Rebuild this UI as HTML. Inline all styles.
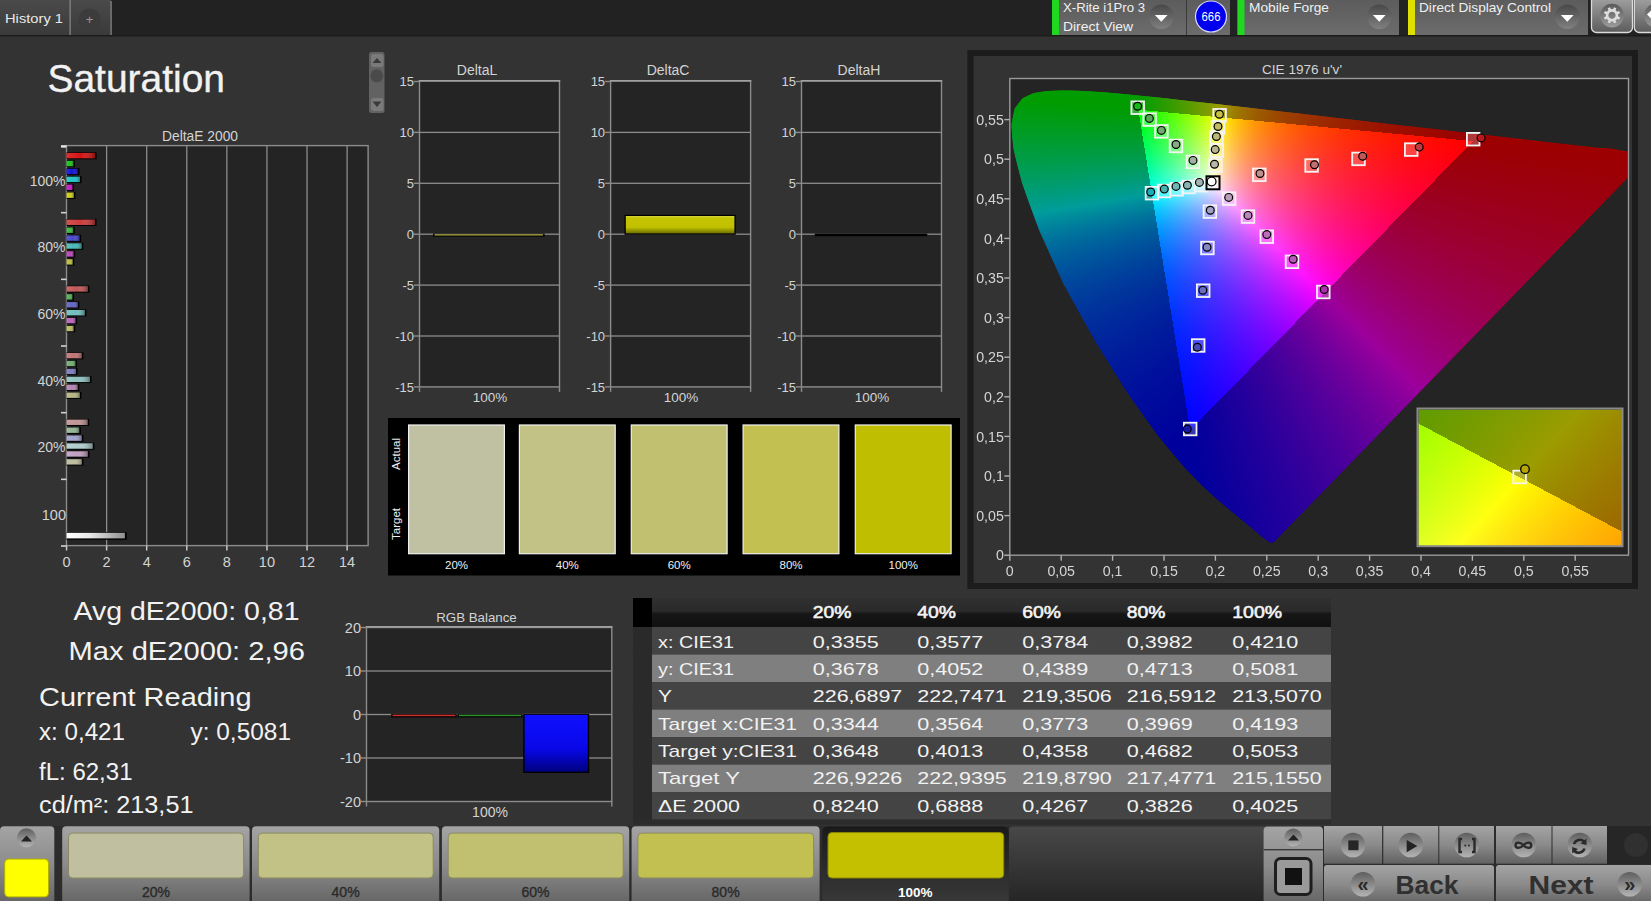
<!DOCTYPE html><html><head><meta charset="utf-8"><style>
html,body{margin:0;padding:0;width:1651px;height:901px;overflow:hidden;background:#333333;}
body{font-family:"Liberation Sans", sans-serif;position:relative;}
svg,canvas{position:absolute;left:0;top:0;}
</style></head><body>
<svg width="1651" height="901" viewBox="0 0 1651 901" font-family='"Liberation Sans", sans-serif'>
<defs>
<linearGradient id="tabg" x1="0" y1="0" x2="0" y2="1"><stop offset="0" stop-color="#4a4a4a"/><stop offset="1" stop-color="#3a3a3a"/></linearGradient>
<linearGradient id="selg" x1="0" y1="0" x2="0" y2="1"><stop offset="0" stop-color="#5c5c5c"/><stop offset="1" stop-color="#6c6c6c"/></linearGradient>
<linearGradient id="barsh" x1="0" y1="0" x2="1" y2="0"><stop offset="0" stop-color="#fff" stop-opacity="0.12"/><stop offset="0.5" stop-color="#fff" stop-opacity="0"/><stop offset="1" stop-color="#000" stop-opacity="0.35"/></linearGradient>
<linearGradient id="ybar" x1="0" y1="0" x2="0" y2="1"><stop offset="0" stop-color="#d4d440"/><stop offset="0.12" stop-color="#c4c400"/><stop offset="0.65" stop-color="#c0c000"/><stop offset="1" stop-color="#6e6e00"/></linearGradient>
<linearGradient id="bbar" x1="0" y1="0" x2="0" y2="1"><stop offset="0" stop-color="#1010ff"/><stop offset="0.6" stop-color="#0808e8"/><stop offset="1" stop-color="#000080"/></linearGradient>
<linearGradient id="btng" x1="0" y1="0" x2="0" y2="1"><stop offset="0" stop-color="#9a9a9a"/><stop offset="0.5" stop-color="#7a7a7a"/><stop offset="1" stop-color="#5a5a5a"/></linearGradient>
<linearGradient id="btnsel" x1="0" y1="0" x2="0" y2="1"><stop offset="0" stop-color="#2a2a2a"/><stop offset="1" stop-color="#3a3a3a"/></linearGradient>
<linearGradient id="bottomg" x1="0" y1="0" x2="0" y2="1"><stop offset="0" stop-color="#4a4a4a"/><stop offset="1" stop-color="#1e1e1e"/></linearGradient>
<linearGradient id="ctlg" x1="0" y1="0" x2="0" y2="1"><stop offset="0" stop-color="#a8a8a8"/><stop offset="1" stop-color="#6a6a6a"/></linearGradient>
<linearGradient id="knob" x1="0" y1="0" x2="0" y2="1"><stop offset="0" stop-color="#484848"/><stop offset="1" stop-color="#808080"/></linearGradient>
<linearGradient id="gearbtn" x1="0" y1="0" x2="0" y2="1"><stop offset="0" stop-color="#a4a4a4"/><stop offset="1" stop-color="#5c5c5c"/></linearGradient>
<linearGradient id="gknob" x1="0" y1="0" x2="0" y2="1"><stop offset="0" stop-color="#5a5a5a"/><stop offset="1" stop-color="#9c9c9c"/></linearGradient>
</defs>
<rect x="0" y="0" width="1651" height="36.3" fill="#222222"/><rect x="0" y="35" width="1651" height="1.3" fill="#1c1c1c"/>
<rect x="0" y="0" width="111" height="35" fill="url(#tabg)"/>
<rect x="69.5" y="0" width="1.2" height="35" fill="#8a8a8a"/>
<rect x="110.5" y="1" width="1.2" height="34" fill="#8a8a8a"/>
<circle cx="89.5" cy="19.5" r="11" fill="#3c3c3c"/>
<text x="89.5" y="23.5" font-size="13" fill="#9a9a9a" text-anchor="middle" >+</text>
<text x="5" y="23" font-size="13.5" fill="#e8e8e8" text-anchor="start" textLength="58" lengthAdjust="spacingAndGlyphs" >History 1</text>
<rect x="1052" y="0" width="134" height="35" fill="url(#selg)"/><rect x="1052" y="0" width="7" height="35" fill="#20d820"/>
<rect x="1186" y="0" width="1.2" height="35" fill="#3a3a3a"/>
<rect x="1187" y="0" width="43" height="35" fill="url(#selg)"/>
<rect x="1237.5" y="0" width="161.5" height="35" fill="url(#selg)"/><rect x="1237.5" y="0" width="7" height="35" fill="#20d820"/>
<rect x="1408" y="0" width="180" height="35" fill="url(#selg)"/><rect x="1408" y="0" width="7" height="35" fill="#e0e000"/>
<rect x="1591.5" y="-4" width="41" height="36.5" rx="5" fill="url(#gearbtn)" stroke="#dcdcdc" stroke-width="1.3"/>
<rect x="1634.3" y="-4" width="30" height="36.5" rx="5" fill="url(#gearbtn)" stroke="#dcdcdc" stroke-width="1.3"/>
<circle cx="1656" cy="15.6" r="11.8" fill="url(#gknob)"/>
<text x="1063" y="12" font-size="13" fill="#f0f0f0" text-anchor="start" textLength="82" lengthAdjust="spacingAndGlyphs" >X-Rite i1Pro 3</text>
<text x="1063" y="31" font-size="13" fill="#f0f0f0" text-anchor="start" textLength="70" lengthAdjust="spacingAndGlyphs" >Direct View</text>
<circle cx="1211" cy="16.5" r="15.5" fill="#0000ee" stroke="#d8d8ff" stroke-width="1.2"/>
<text x="1211" y="21" font-size="12" fill="#ffffff" text-anchor="middle" textLength="19" lengthAdjust="spacingAndGlyphs" >666</text>
<text x="1249" y="12" font-size="13" fill="#f0f0f0" text-anchor="start" textLength="80" lengthAdjust="spacingAndGlyphs" >Mobile Forge</text>
<text x="1419" y="12" font-size="13" fill="#f0f0f0" text-anchor="start" textLength="132" lengthAdjust="spacingAndGlyphs" >Direct Display Control</text>
<circle cx="1161.3" cy="16.7" r="12.3" fill="url(#knob)"/>
<path d="M1154.8 15.1 L1167.6 15.1 L1161.3 21.8 Z" fill="#ffffff"/>
<circle cx="1379.3" cy="16.7" r="12.3" fill="url(#knob)"/>
<path d="M1372.8 15.1 L1385.6 15.1 L1379.3 21.8 Z" fill="#ffffff"/>
<circle cx="1567.3" cy="16.7" r="12.3" fill="url(#knob)"/>
<path d="M1560.8 15.1 L1573.6 15.1 L1567.3 21.8 Z" fill="#ffffff"/>
<circle cx="1612" cy="15.6" r="11.8" fill="url(#gknob)"/>
<g transform="translate(1612,15.3)"><rect x="-1.3" y="-8.2" width="2.6" height="3.6" transform="rotate(22.5)" fill="#dedede"/><rect x="-1.3" y="-8.2" width="2.6" height="3.6" transform="rotate(67.5)" fill="#dedede"/><rect x="-1.3" y="-8.2" width="2.6" height="3.6" transform="rotate(112.5)" fill="#dedede"/><rect x="-1.3" y="-8.2" width="2.6" height="3.6" transform="rotate(157.5)" fill="#dedede"/><rect x="-1.3" y="-8.2" width="2.6" height="3.6" transform="rotate(202.5)" fill="#dedede"/><rect x="-1.3" y="-8.2" width="2.6" height="3.6" transform="rotate(247.5)" fill="#dedede"/><rect x="-1.3" y="-8.2" width="2.6" height="3.6" transform="rotate(292.5)" fill="#dedede"/><rect x="-1.3" y="-8.2" width="2.6" height="3.6" transform="rotate(337.5)" fill="#dedede"/><circle r="4.9" fill="none" stroke="#dedede" stroke-width="2.6"/></g>
<path d="M1647 14.5 L1651 10.5 L1651 18.5 Z" fill="#ffffff"/>
<text x="47.5" y="92" font-size="38.5" fill="#f2f2f2" text-anchor="start" textLength="177.5" lengthAdjust="spacingAndGlyphs" stroke="#f2f2f2" stroke-width="0.35">Saturation</text>
<rect x="369" y="52" width="15.5" height="61" rx="2.5" fill="#626262"/>
<rect x="371" y="54" width="12.5" height="13" rx="2.5" fill="#7a7a7a"/>
<path d="M372.5 63 L381.5 63 L377 58 Z" fill="#3a3a3a"/>
<circle cx="376.8" cy="75.8" r="6.5" fill="#4a4a4a"/>
<rect x="371" y="98" width="12.5" height="13" rx="2.5" fill="#7a7a7a"/>
<path d="M372.5 101.5 L381.5 101.5 L377 107 Z" fill="#3a3a3a"/>
<text x="200" y="141" font-size="14" fill="#d4d4d4" text-anchor="middle" textLength="76" lengthAdjust="spacingAndGlyphs" >DeltaE 2000</text>
<rect x="66.5" y="146" width="301.5" height="400" fill="#242424"/>
<rect x="105.98" y="146" width="1.3" height="400" fill="#8c8c8c"/>
<rect x="146.06" y="146" width="1.3" height="400" fill="#8c8c8c"/>
<rect x="186.14" y="146" width="1.3" height="400" fill="#8c8c8c"/>
<rect x="226.22" y="146" width="1.3" height="400" fill="#8c8c8c"/>
<rect x="266.30" y="146" width="1.3" height="400" fill="#8c8c8c"/>
<rect x="306.38" y="146" width="1.3" height="400" fill="#8c8c8c"/>
<rect x="346.46" y="146" width="1.3" height="400" fill="#8c8c8c"/>
<rect x="66.5" y="145.6" width="301.6" height="400" fill="none" stroke="#8c8c8c" stroke-width="1.4"/>
<rect x="65.80" y="545.5" width="1.5" height="5" fill="#c8c8c8"/>
<text x="66.5" y="566.8" font-size="14.5" fill="#d4d4d4" text-anchor="middle" >0</text>
<rect x="105.88" y="545.5" width="1.5" height="5" fill="#c8c8c8"/>
<text x="106.6" y="566.8" font-size="14.5" fill="#d4d4d4" text-anchor="middle" >2</text>
<rect x="145.96" y="545.5" width="1.5" height="5" fill="#c8c8c8"/>
<text x="146.7" y="566.8" font-size="14.5" fill="#d4d4d4" text-anchor="middle" >4</text>
<rect x="186.04" y="545.5" width="1.5" height="5" fill="#c8c8c8"/>
<text x="186.7" y="566.8" font-size="14.5" fill="#d4d4d4" text-anchor="middle" >6</text>
<rect x="226.12" y="545.5" width="1.5" height="5" fill="#c8c8c8"/>
<text x="226.8" y="566.8" font-size="14.5" fill="#d4d4d4" text-anchor="middle" >8</text>
<rect x="266.20" y="545.5" width="1.5" height="5" fill="#c8c8c8"/>
<text x="266.9" y="566.8" font-size="14.5" fill="#d4d4d4" text-anchor="middle" >10</text>
<rect x="306.28" y="545.5" width="1.5" height="5" fill="#c8c8c8"/>
<text x="307.0" y="566.8" font-size="14.5" fill="#d4d4d4" text-anchor="middle" >12</text>
<rect x="346.36" y="545.5" width="1.5" height="5" fill="#c8c8c8"/>
<text x="347.1" y="566.8" font-size="14.5" fill="#d4d4d4" text-anchor="middle" >14</text>
<rect x="61" y="145.20" width="5.5" height="2.4" fill="#e8e8e8"/>
<rect x="61" y="211.87" width="5.5" height="1.6" fill="#d0d0d0"/>
<rect x="61" y="278.53" width="5.5" height="1.6" fill="#d0d0d0"/>
<rect x="61" y="345.20" width="5.5" height="1.6" fill="#d0d0d0"/>
<rect x="61" y="411.87" width="5.5" height="1.6" fill="#d0d0d0"/>
<rect x="61" y="478.53" width="5.5" height="1.6" fill="#d0d0d0"/>
<rect x="61" y="545.20" width="5.5" height="1.6" fill="#d0d0d0"/>
<text x="65.5" y="185.5" font-size="14" fill="#d4d4d4" text-anchor="end" >100%</text>
<text x="65.5" y="252.16666666666669" font-size="14" fill="#d4d4d4" text-anchor="end" >80%</text>
<text x="65.5" y="318.83333333333337" font-size="14" fill="#d4d4d4" text-anchor="end" >60%</text>
<text x="65.5" y="385.5" font-size="14" fill="#d4d4d4" text-anchor="end" >40%</text>
<text x="65.5" y="452.1666666666667" font-size="14" fill="#d4d4d4" text-anchor="end" >20%</text>
<text x="66" y="519.5" font-size="14.5" fill="#d4d4d4" text-anchor="end" >100</text>
<rect x="66.5" y="152.30" width="30.10" height="7" fill="#000"/>
<rect x="66.5" y="152.90" width="28.50" height="5.4" fill="#d41414"/>
<rect x="66.5" y="152.90" width="28.50" height="5.4" fill="url(#barsh)"/>
<rect x="66.5" y="160.22" width="8.50" height="7" fill="#000"/>
<rect x="66.5" y="160.82" width="6.90" height="5.4" fill="#20c020"/>
<rect x="66.5" y="160.82" width="6.90" height="5.4" fill="url(#barsh)"/>
<rect x="66.5" y="168.14" width="13.05" height="7" fill="#000"/>
<rect x="66.5" y="168.74" width="11.45" height="5.4" fill="#1414d4"/>
<rect x="66.5" y="168.74" width="11.45" height="5.4" fill="url(#barsh)"/>
<rect x="66.5" y="176.06" width="15.10" height="7" fill="#000"/>
<rect x="66.5" y="176.66" width="13.50" height="5.4" fill="#20c4c4"/>
<rect x="66.5" y="176.66" width="13.50" height="5.4" fill="url(#barsh)"/>
<rect x="66.5" y="183.98" width="7.60" height="7" fill="#000"/>
<rect x="66.5" y="184.58" width="6.00" height="5.4" fill="#c420c4"/>
<rect x="66.5" y="184.58" width="6.00" height="5.4" fill="url(#barsh)"/>
<rect x="66.5" y="191.90" width="8.90" height="7" fill="#000"/>
<rect x="66.5" y="192.50" width="7.30" height="5.4" fill="#cccc20"/>
<rect x="66.5" y="192.50" width="7.30" height="5.4" fill="url(#barsh)"/>
<rect x="66.5" y="218.97" width="30.00" height="7" fill="#000"/>
<rect x="66.5" y="219.57" width="28.40" height="5.4" fill="#cc3c3c"/>
<rect x="66.5" y="219.57" width="28.40" height="5.4" fill="url(#barsh)"/>
<rect x="66.5" y="226.89" width="8.30" height="7" fill="#000"/>
<rect x="66.5" y="227.49" width="6.70" height="5.4" fill="#40b440"/>
<rect x="66.5" y="227.49" width="6.70" height="5.4" fill="url(#barsh)"/>
<rect x="66.5" y="234.81" width="14.60" height="7" fill="#000"/>
<rect x="66.5" y="235.41" width="13.00" height="5.4" fill="#4848cc"/>
<rect x="66.5" y="235.41" width="13.00" height="5.4" fill="url(#barsh)"/>
<rect x="66.5" y="242.73" width="16.80" height="7" fill="#000"/>
<rect x="66.5" y="243.33" width="15.20" height="5.4" fill="#48b8b8"/>
<rect x="66.5" y="243.33" width="15.20" height="5.4" fill="url(#barsh)"/>
<rect x="66.5" y="250.65" width="8.70" height="7" fill="#000"/>
<rect x="66.5" y="251.25" width="7.10" height="5.4" fill="#bc48bc"/>
<rect x="66.5" y="251.25" width="7.10" height="5.4" fill="url(#barsh)"/>
<rect x="66.5" y="258.57" width="7.80" height="7" fill="#000"/>
<rect x="66.5" y="259.17" width="6.20" height="5.4" fill="#bcbc48"/>
<rect x="66.5" y="259.17" width="6.20" height="5.4" fill="url(#barsh)"/>
<rect x="66.5" y="285.63" width="23.00" height="7" fill="#000"/>
<rect x="66.5" y="286.23" width="21.40" height="5.4" fill="#c05858"/>
<rect x="66.5" y="286.23" width="21.40" height="5.4" fill="url(#barsh)"/>
<rect x="66.5" y="293.55" width="7.50" height="7" fill="#000"/>
<rect x="66.5" y="294.15" width="5.90" height="5.4" fill="#58b058"/>
<rect x="66.5" y="294.15" width="5.90" height="5.4" fill="url(#barsh)"/>
<rect x="66.5" y="301.47" width="12.90" height="7" fill="#000"/>
<rect x="66.5" y="302.07" width="11.30" height="5.4" fill="#6464c4"/>
<rect x="66.5" y="302.07" width="11.30" height="5.4" fill="url(#barsh)"/>
<rect x="66.5" y="309.39" width="19.90" height="7" fill="#000"/>
<rect x="66.5" y="309.99" width="18.30" height="5.4" fill="#70bcbc"/>
<rect x="66.5" y="309.99" width="18.30" height="5.4" fill="url(#barsh)"/>
<rect x="66.5" y="317.31" width="10.60" height="7" fill="#000"/>
<rect x="66.5" y="317.91" width="9.00" height="5.4" fill="#b864b8"/>
<rect x="66.5" y="317.91" width="9.00" height="5.4" fill="url(#barsh)"/>
<rect x="66.5" y="325.23" width="8.70" height="7" fill="#000"/>
<rect x="66.5" y="325.83" width="7.10" height="5.4" fill="#b8b864"/>
<rect x="66.5" y="325.83" width="7.10" height="5.4" fill="url(#barsh)"/>
<rect x="66.5" y="352.30" width="16.90" height="7" fill="#000"/>
<rect x="66.5" y="352.90" width="15.30" height="5.4" fill="#c07474"/>
<rect x="66.5" y="352.90" width="15.30" height="5.4" fill="url(#barsh)"/>
<rect x="66.5" y="360.22" width="10.50" height="7" fill="#000"/>
<rect x="66.5" y="360.82" width="8.90" height="5.4" fill="#74ac74"/>
<rect x="66.5" y="360.82" width="8.90" height="5.4" fill="url(#barsh)"/>
<rect x="66.5" y="368.14" width="11.10" height="7" fill="#000"/>
<rect x="66.5" y="368.74" width="9.50" height="5.4" fill="#7c7cc0"/>
<rect x="66.5" y="368.74" width="9.50" height="5.4" fill="url(#barsh)"/>
<rect x="66.5" y="376.06" width="25.00" height="7" fill="#000"/>
<rect x="66.5" y="376.66" width="23.40" height="5.4" fill="#90c0c0"/>
<rect x="66.5" y="376.66" width="23.40" height="5.4" fill="url(#barsh)"/>
<rect x="66.5" y="383.98" width="12.80" height="7" fill="#000"/>
<rect x="66.5" y="384.58" width="11.20" height="5.4" fill="#b484b4"/>
<rect x="66.5" y="384.58" width="11.20" height="5.4" fill="url(#barsh)"/>
<rect x="66.5" y="391.90" width="14.90" height="7" fill="#000"/>
<rect x="66.5" y="392.50" width="13.30" height="5.4" fill="#b4b484"/>
<rect x="66.5" y="392.50" width="13.30" height="5.4" fill="url(#barsh)"/>
<rect x="66.5" y="418.97" width="22.70" height="7" fill="#000"/>
<rect x="66.5" y="419.57" width="21.10" height="5.4" fill="#c09494"/>
<rect x="66.5" y="419.57" width="21.10" height="5.4" fill="url(#barsh)"/>
<rect x="66.5" y="426.89" width="14.30" height="7" fill="#000"/>
<rect x="66.5" y="427.49" width="12.70" height="5.4" fill="#94b494"/>
<rect x="66.5" y="427.49" width="12.70" height="5.4" fill="url(#barsh)"/>
<rect x="66.5" y="434.81" width="16.90" height="7" fill="#000"/>
<rect x="66.5" y="435.41" width="15.30" height="5.4" fill="#a0a0cc"/>
<rect x="66.5" y="435.41" width="15.30" height="5.4" fill="url(#barsh)"/>
<rect x="66.5" y="442.73" width="27.80" height="7" fill="#000"/>
<rect x="66.5" y="443.33" width="26.20" height="5.4" fill="#b0cccc"/>
<rect x="66.5" y="443.33" width="26.20" height="5.4" fill="url(#barsh)"/>
<rect x="66.5" y="450.65" width="22.90" height="7" fill="#000"/>
<rect x="66.5" y="451.25" width="21.30" height="5.4" fill="#c0a0c0"/>
<rect x="66.5" y="451.25" width="21.30" height="5.4" fill="url(#barsh)"/>
<rect x="66.5" y="458.57" width="16.90" height="7" fill="#000"/>
<rect x="66.5" y="459.17" width="15.30" height="5.4" fill="#bcbca0"/>
<rect x="66.5" y="459.17" width="15.30" height="5.4" fill="url(#barsh)"/>
<linearGradient id="wbar" x1="0" y1="0" x2="1" y2="0"><stop offset="0" stop-color="#ffffff"/><stop offset="0.4" stop-color="#e8e8e8"/><stop offset="1" stop-color="#909090"/></linearGradient>
<rect x="66.5" y="532.2" width="60.20" height="7.6" fill="#000"/>
<rect x="66.5" y="532.8" width="58.40" height="5.6" fill="url(#wbar)"/>
<rect x="419.5" y="81.50" width="140.0" height="305.40" fill="#242424"/><rect x="419.5" y="131.75" width="140.0" height="1.3" fill="#8c8c8c"/><rect x="419.5" y="182.65" width="140.0" height="1.3" fill="#8c8c8c"/><rect x="419.5" y="233.55" width="140.0" height="1.3" fill="#8c8c8c"/><rect x="419.5" y="284.45" width="140.0" height="1.3" fill="#8c8c8c"/><rect x="419.5" y="335.35" width="140.0" height="1.3" fill="#8c8c8c"/><rect x="419.5" y="80.80" width="140.0" height="306.10" fill="none" stroke="#8c8c8c" stroke-width="1.4"/><rect x="418.8" y="80.00" width="141.4" height="1.6" fill="#a0a0a0"/><rect x="414.0" y="80.80" width="5.5" height="1.4" fill="#8c8c8c"/><text x="414.0" y="86.30" font-size="13" fill="#d4d4d4" text-anchor="end" >15</text><rect x="414.0" y="131.70" width="5.5" height="1.4" fill="#8c8c8c"/><text x="414.0" y="137.20" font-size="13" fill="#d4d4d4" text-anchor="end" >10</text><rect x="414.0" y="182.60" width="5.5" height="1.4" fill="#8c8c8c"/><text x="414.0" y="188.10" font-size="13" fill="#d4d4d4" text-anchor="end" >5</text><rect x="414.0" y="233.50" width="5.5" height="1.4" fill="#8c8c8c"/><text x="414.0" y="239.00" font-size="13" fill="#d4d4d4" text-anchor="end" >0</text><rect x="414.0" y="284.40" width="5.5" height="1.4" fill="#8c8c8c"/><text x="414.0" y="289.90" font-size="13" fill="#d4d4d4" text-anchor="end" >-5</text><rect x="414.0" y="335.30" width="5.5" height="1.4" fill="#8c8c8c"/><text x="414.0" y="340.80" font-size="13" fill="#d4d4d4" text-anchor="end" >-10</text><rect x="414.0" y="386.20" width="5.5" height="1.4" fill="#8c8c8c"/><text x="414.0" y="391.70" font-size="13" fill="#d4d4d4" text-anchor="end" >-15</text><rect x="418.8" y="386.9" width="1.4" height="5" fill="#8c8c8c"/><rect x="558.8" y="386.9" width="1.4" height="5" fill="#8c8c8c"/><text x="477.0" y="75" font-size="14" fill="#d4d4d4" text-anchor="middle" >DeltaL</text><text x="490.0" y="401.5" font-size="13.5" fill="#d4d4d4" text-anchor="middle" >100%</text><rect x="433" y="233.6" width="111.6" height="3" fill="#000"/><rect x="434.5" y="234.2" width="108.6" height="1.3" fill="#b0b040"/>
<rect x="610.6" y="81.50" width="140.0" height="305.40" fill="#242424"/><rect x="610.6" y="131.75" width="140.0" height="1.3" fill="#8c8c8c"/><rect x="610.6" y="182.65" width="140.0" height="1.3" fill="#8c8c8c"/><rect x="610.6" y="233.55" width="140.0" height="1.3" fill="#8c8c8c"/><rect x="610.6" y="284.45" width="140.0" height="1.3" fill="#8c8c8c"/><rect x="610.6" y="335.35" width="140.0" height="1.3" fill="#8c8c8c"/><rect x="610.6" y="80.80" width="140.0" height="306.10" fill="none" stroke="#8c8c8c" stroke-width="1.4"/><rect x="609.9" y="80.00" width="141.4" height="1.6" fill="#a0a0a0"/><rect x="605.1" y="80.80" width="5.5" height="1.4" fill="#8c8c8c"/><text x="605.1" y="86.30" font-size="13" fill="#d4d4d4" text-anchor="end" >15</text><rect x="605.1" y="131.70" width="5.5" height="1.4" fill="#8c8c8c"/><text x="605.1" y="137.20" font-size="13" fill="#d4d4d4" text-anchor="end" >10</text><rect x="605.1" y="182.60" width="5.5" height="1.4" fill="#8c8c8c"/><text x="605.1" y="188.10" font-size="13" fill="#d4d4d4" text-anchor="end" >5</text><rect x="605.1" y="233.50" width="5.5" height="1.4" fill="#8c8c8c"/><text x="605.1" y="239.00" font-size="13" fill="#d4d4d4" text-anchor="end" >0</text><rect x="605.1" y="284.40" width="5.5" height="1.4" fill="#8c8c8c"/><text x="605.1" y="289.90" font-size="13" fill="#d4d4d4" text-anchor="end" >-5</text><rect x="605.1" y="335.30" width="5.5" height="1.4" fill="#8c8c8c"/><text x="605.1" y="340.80" font-size="13" fill="#d4d4d4" text-anchor="end" >-10</text><rect x="605.1" y="386.20" width="5.5" height="1.4" fill="#8c8c8c"/><text x="605.1" y="391.70" font-size="13" fill="#d4d4d4" text-anchor="end" >-15</text><rect x="609.9" y="386.9" width="1.4" height="5" fill="#8c8c8c"/><rect x="749.9" y="386.9" width="1.4" height="5" fill="#8c8c8c"/><text x="668.1" y="75" font-size="14" fill="#d4d4d4" text-anchor="middle" >DeltaC</text><text x="681.1" y="401.5" font-size="13.5" fill="#d4d4d4" text-anchor="middle" >100%</text><rect x="624.5" y="214.8" width="111.2" height="20" fill="#000"/><rect x="625.8" y="216" width="108.6" height="17.4" fill="url(#ybar)"/>
<rect x="801.5" y="81.50" width="140.0" height="305.40" fill="#242424"/><rect x="801.5" y="131.75" width="140.0" height="1.3" fill="#8c8c8c"/><rect x="801.5" y="182.65" width="140.0" height="1.3" fill="#8c8c8c"/><rect x="801.5" y="233.55" width="140.0" height="1.3" fill="#8c8c8c"/><rect x="801.5" y="284.45" width="140.0" height="1.3" fill="#8c8c8c"/><rect x="801.5" y="335.35" width="140.0" height="1.3" fill="#8c8c8c"/><rect x="801.5" y="80.80" width="140.0" height="306.10" fill="none" stroke="#8c8c8c" stroke-width="1.4"/><rect x="800.8" y="80.00" width="141.4" height="1.6" fill="#a0a0a0"/><rect x="796.0" y="80.80" width="5.5" height="1.4" fill="#8c8c8c"/><text x="796.0" y="86.30" font-size="13" fill="#d4d4d4" text-anchor="end" >15</text><rect x="796.0" y="131.70" width="5.5" height="1.4" fill="#8c8c8c"/><text x="796.0" y="137.20" font-size="13" fill="#d4d4d4" text-anchor="end" >10</text><rect x="796.0" y="182.60" width="5.5" height="1.4" fill="#8c8c8c"/><text x="796.0" y="188.10" font-size="13" fill="#d4d4d4" text-anchor="end" >5</text><rect x="796.0" y="233.50" width="5.5" height="1.4" fill="#8c8c8c"/><text x="796.0" y="239.00" font-size="13" fill="#d4d4d4" text-anchor="end" >0</text><rect x="796.0" y="284.40" width="5.5" height="1.4" fill="#8c8c8c"/><text x="796.0" y="289.90" font-size="13" fill="#d4d4d4" text-anchor="end" >-5</text><rect x="796.0" y="335.30" width="5.5" height="1.4" fill="#8c8c8c"/><text x="796.0" y="340.80" font-size="13" fill="#d4d4d4" text-anchor="end" >-10</text><rect x="796.0" y="386.20" width="5.5" height="1.4" fill="#8c8c8c"/><text x="796.0" y="391.70" font-size="13" fill="#d4d4d4" text-anchor="end" >-15</text><rect x="800.8" y="386.9" width="1.4" height="5" fill="#8c8c8c"/><rect x="940.8" y="386.9" width="1.4" height="5" fill="#8c8c8c"/><text x="859.0" y="75" font-size="14" fill="#d4d4d4" text-anchor="middle" >DeltaH</text><text x="872.0" y="401.5" font-size="13.5" fill="#d4d4d4" text-anchor="middle" >100%</text><rect x="814.7" y="233.6" width="112.6" height="2.6" fill="#000"/>
<rect x="388" y="418" width="572" height="157.5" fill="#000"/>
<rect x="408.6" y="425" width="95.8" height="128.7" fill="#c0c0a2" stroke="#f0f0f0" stroke-width="1.2"/>
<text x="456.5" y="568.5" font-size="11.5" fill="#f0f0f0" text-anchor="middle" >20%</text>
<rect x="519.4" y="425" width="95.8" height="128.7" fill="#c2c286" stroke="#f0f0f0" stroke-width="1.2"/>
<text x="567.3" y="568.5" font-size="11.5" fill="#f0f0f0" text-anchor="middle" >40%</text>
<rect x="631.3" y="425" width="95.8" height="128.7" fill="#c0c070" stroke="#f0f0f0" stroke-width="1.2"/>
<text x="679.2" y="568.5" font-size="11.5" fill="#f0f0f0" text-anchor="middle" >60%</text>
<rect x="743.1" y="425" width="95.8" height="128.7" fill="#c2c050" stroke="#f0f0f0" stroke-width="1.2"/>
<text x="791.0" y="568.5" font-size="11.5" fill="#f0f0f0" text-anchor="middle" >80%</text>
<rect x="855.3" y="425" width="95.8" height="128.7" fill="#c0be00" stroke="#f0f0f0" stroke-width="1.2"/>
<text x="903.2" y="568.5" font-size="11.5" fill="#f0f0f0" text-anchor="middle" >100%</text>
<text transform="translate(400,454) rotate(-90)" font-size="11.5" fill="#f0f0f0" text-anchor="middle">Actual</text>
<text transform="translate(400,524) rotate(-90)" font-size="11.5" fill="#f0f0f0" text-anchor="middle">Target</text>
<rect x="967.4" y="50" width="670.6" height="539" fill="#1c1c1c"/>
<rect x="973.6" y="56" width="658.4" height="527" fill="#333333"/>
<text x="1302" y="74" font-size="13.5" fill="#d4d4d4" text-anchor="middle" textLength="80" lengthAdjust="spacingAndGlyphs" >CIE 1976 u'v'</text>
<rect x="1009.8" y="78.5" width="618.7" height="476.7" fill="#242424"/>
<clipPath id="locus"><path d="M1273.8 542.1 L1273.6 542.1 L1273.4 542.3 L1273.1 542.3 L1272.7 542.6 L1272.1 542.6 L1271.5 542.6 L1270.6 542.6 L1269.1 541.8 L1266.4 540.1 L1262.8 537.3 L1257.6 533.1 L1251.1 527.5 L1242.8 520.6 L1231.9 511.7 L1218.8 500.7 L1202.8 486.2 L1183.5 466.5 L1157.9 435.6 L1127.7 393.3 L1094.9 340.7 L1063.4 283.8 L1038.7 229.2 L1022.0 183.1 L1013.4 148.9 L1011.3 125.0 L1014.6 108.6 L1022.4 98.2 L1033.6 92.9 L1046.8 91.0 L1061.3 90.5 L1075.9 90.7 L1091.2 91.4 L1107.7 92.6 L1125.7 94.2 L1145.4 96.2 L1167.2 98.5 L1191.3 101.2 L1218.1 104.3 L1247.4 107.6 L1279.5 111.3 L1314.0 115.3 L1350.6 119.5 L1388.2 123.9 L1424.6 128.0 L1460.0 132.1 L1492.1 135.8 L1520.5 139.1 L1544.6 141.9 L1564.8 144.2 L1581.9 146.1 L1596.7 147.8 L1612.3 148.8 L1619.3 150.4 L1627.1 151.3 L1633.2 152.0 L1637.8 152.6 L1640.8 152.9 L1643.2 153.2 L1645.1 153.4 L1647.1 153.6 L1648.7 153.8 L1649.8 154.0 L1650.4 154.0 L1650.6 154.1 Z"/></clipPath><g clip-path="url(#locus)" shape-rendering="crispEdges"><rect x="1010" y="79" width="128" height="8" fill="#00a000"/><rect x="1138" y="79" width="16" height="8" fill="#10a000"/><rect x="1154" y="79" width="8" height="8" fill="#20a000"/><rect x="1162" y="79" width="8" height="8" fill="#30a000"/><rect x="1170" y="79" width="8" height="8" fill="#40a000"/><rect x="1178" y="79" width="8" height="8" fill="#50a000"/><rect x="1186" y="79" width="16" height="8" fill="#60a000"/><rect x="1202" y="79" width="8" height="8" fill="#70a000"/><rect x="1210" y="79" width="8" height="8" fill="#90a000"/><rect x="1218" y="79" width="8" height="8" fill="#a0a000"/><rect x="1226" y="79" width="8" height="8" fill="#a09000"/><rect x="1234" y="79" width="8" height="8" fill="#a08000"/><rect x="1242" y="79" width="8" height="8" fill="#a07000"/><rect x="1250" y="79" width="16" height="8" fill="#a06000"/><rect x="1266" y="79" width="24" height="8" fill="#a05000"/><rect x="1290" y="79" width="24" height="8" fill="#a04000"/><rect x="1314" y="79" width="32" height="8" fill="#a03000"/><rect x="1346" y="79" width="48" height="8" fill="#a02000"/><rect x="1394" y="79" width="80" height="8" fill="#a01000"/><rect x="1474" y="79" width="155" height="8" fill="#a00000"/><rect x="1010" y="87" width="128" height="8" fill="#00a000"/><rect x="1138" y="87" width="16" height="8" fill="#10a000"/><rect x="1154" y="87" width="8" height="8" fill="#20a000"/><rect x="1162" y="87" width="8" height="8" fill="#30a000"/><rect x="1170" y="87" width="8" height="8" fill="#40a000"/><rect x="1178" y="87" width="8" height="8" fill="#50a000"/><rect x="1186" y="87" width="8" height="8" fill="#60a000"/><rect x="1194" y="87" width="8" height="8" fill="#70a000"/><rect x="1202" y="87" width="8" height="8" fill="#80a000"/><rect x="1210" y="87" width="8" height="8" fill="#90a000"/><rect x="1218" y="87" width="8" height="8" fill="#a0a000"/><rect x="1226" y="87" width="8" height="8" fill="#a09000"/><rect x="1234" y="87" width="8" height="8" fill="#a08000"/><rect x="1242" y="87" width="8" height="8" fill="#a07000"/><rect x="1250" y="87" width="16" height="8" fill="#a06000"/><rect x="1266" y="87" width="16" height="8" fill="#a05000"/><rect x="1282" y="87" width="24" height="8" fill="#a04000"/><rect x="1306" y="87" width="32" height="8" fill="#a03000"/><rect x="1338" y="87" width="48" height="8" fill="#a02000"/><rect x="1386" y="87" width="80" height="8" fill="#a01000"/><rect x="1466" y="87" width="163" height="8" fill="#a00000"/><rect x="1010" y="95" width="136" height="8" fill="#00a000"/><rect x="1146" y="95" width="8" height="8" fill="#10a000"/><rect x="1154" y="95" width="8" height="8" fill="#20a000"/><rect x="1162" y="95" width="8" height="8" fill="#30a000"/><rect x="1170" y="95" width="8" height="8" fill="#40a000"/><rect x="1178" y="95" width="8" height="8" fill="#50a000"/><rect x="1186" y="95" width="8" height="8" fill="#60a000"/><rect x="1194" y="95" width="8" height="8" fill="#70a000"/><rect x="1202" y="95" width="8" height="8" fill="#80a000"/><rect x="1210" y="95" width="8" height="8" fill="#90a000"/><rect x="1218" y="95" width="8" height="8" fill="#a0a000"/><rect x="1226" y="95" width="8" height="8" fill="#a09000"/><rect x="1234" y="95" width="8" height="8" fill="#a08000"/><rect x="1242" y="95" width="8" height="8" fill="#a07000"/><rect x="1250" y="95" width="16" height="8" fill="#a06000"/><rect x="1266" y="95" width="16" height="8" fill="#a05000"/><rect x="1282" y="95" width="24" height="8" fill="#a04000"/><rect x="1306" y="95" width="32" height="8" fill="#a03000"/><rect x="1338" y="95" width="48" height="8" fill="#a02000"/><rect x="1386" y="95" width="72" height="8" fill="#a01000"/><rect x="1458" y="95" width="171" height="8" fill="#a00000"/><rect x="1010" y="103" width="16" height="8" fill="#00a010"/><rect x="1026" y="103" width="120" height="8" fill="#00a000"/><rect x="1146" y="103" width="8" height="8" fill="#10a000"/><rect x="1154" y="103" width="8" height="8" fill="#20a000"/><rect x="1162" y="103" width="8" height="8" fill="#30a000"/><rect x="1170" y="103" width="8" height="8" fill="#40a000"/><rect x="1178" y="103" width="8" height="8" fill="#50a000"/><rect x="1186" y="103" width="8" height="8" fill="#60a000"/><rect x="1194" y="103" width="8" height="8" fill="#70a000"/><rect x="1202" y="103" width="8" height="8" fill="#80a000"/><rect x="1210" y="103" width="8" height="8" fill="#90a000"/><rect x="1218" y="103" width="8" height="8" fill="#a09000"/><rect x="1226" y="103" width="16" height="8" fill="#a08000"/><rect x="1242" y="103" width="8" height="8" fill="#a07000"/><rect x="1250" y="103" width="16" height="8" fill="#a06000"/><rect x="1266" y="103" width="16" height="8" fill="#a05000"/><rect x="1282" y="103" width="16" height="8" fill="#a04000"/><rect x="1298" y="103" width="32" height="8" fill="#a03000"/><rect x="1330" y="103" width="48" height="8" fill="#a02000"/><rect x="1378" y="103" width="72" height="8" fill="#a01000"/><rect x="1450" y="103" width="179" height="8" fill="#a00000"/><rect x="1010" y="111" width="120" height="8" fill="#00a010"/><rect x="1130" y="111" width="8" height="8" fill="#00a000"/><rect x="1138" y="111" width="8" height="8" fill="#00ff10"/><rect x="1146" y="111" width="8" height="8" fill="#20ff10"/><rect x="1154" y="111" width="8" height="8" fill="#30ff10"/><rect x="1162" y="111" width="8" height="8" fill="#40ff00"/><rect x="1170" y="111" width="8" height="8" fill="#60ff00"/><rect x="1178" y="111" width="8" height="8" fill="#70ff00"/><rect x="1186" y="111" width="8" height="8" fill="#90ff00"/><rect x="1194" y="111" width="8" height="8" fill="#70a000"/><rect x="1202" y="111" width="8" height="8" fill="#80a000"/><rect x="1210" y="111" width="8" height="8" fill="#90a000"/><rect x="1218" y="111" width="8" height="8" fill="#a09000"/><rect x="1226" y="111" width="8" height="8" fill="#a08000"/><rect x="1234" y="111" width="16" height="8" fill="#a07000"/><rect x="1250" y="111" width="8" height="8" fill="#a06000"/><rect x="1258" y="111" width="16" height="8" fill="#a05000"/><rect x="1274" y="111" width="24" height="8" fill="#a04000"/><rect x="1298" y="111" width="32" height="8" fill="#a03000"/><rect x="1330" y="111" width="40" height="8" fill="#a02000"/><rect x="1370" y="111" width="72" height="8" fill="#a01000"/><rect x="1442" y="111" width="187" height="8" fill="#a00000"/><rect x="1010" y="119" width="48" height="8" fill="#00a020"/><rect x="1058" y="119" width="80" height="8" fill="#00a010"/><rect x="1138" y="119" width="8" height="8" fill="#00ff20"/><rect x="1146" y="119" width="8" height="8" fill="#20ff20"/><rect x="1154" y="119" width="8" height="8" fill="#30ff20"/><rect x="1162" y="119" width="8" height="8" fill="#40ff20"/><rect x="1170" y="119" width="8" height="8" fill="#60ff20"/><rect x="1178" y="119" width="8" height="8" fill="#70ff20"/><rect x="1186" y="119" width="8" height="8" fill="#90ff10"/><rect x="1194" y="119" width="8" height="8" fill="#b0ff10"/><rect x="1202" y="119" width="8" height="8" fill="#d0ff10"/><rect x="1210" y="119" width="8" height="8" fill="#f0ff10"/><rect x="1218" y="119" width="8" height="8" fill="#fff010"/><rect x="1226" y="119" width="8" height="8" fill="#ffd010"/><rect x="1234" y="119" width="8" height="8" fill="#ffc010"/><rect x="1242" y="119" width="8" height="8" fill="#ffb000"/><rect x="1250" y="119" width="8" height="8" fill="#ffa000"/><rect x="1258" y="119" width="8" height="8" fill="#ff9000"/><rect x="1266" y="119" width="8" height="8" fill="#ff8000"/><rect x="1274" y="119" width="8" height="8" fill="#ff7000"/><rect x="1282" y="119" width="16" height="8" fill="#a04000"/><rect x="1298" y="119" width="24" height="8" fill="#a03000"/><rect x="1322" y="119" width="48" height="8" fill="#a02000"/><rect x="1370" y="119" width="64" height="8" fill="#a01000"/><rect x="1434" y="119" width="195" height="8" fill="#a00000"/><rect x="1010" y="127" width="128" height="8" fill="#00a020"/><rect x="1138" y="127" width="8" height="8" fill="#00ff30"/><rect x="1146" y="127" width="8" height="8" fill="#10ff30"/><rect x="1154" y="127" width="8" height="8" fill="#30ff30"/><rect x="1162" y="127" width="8" height="8" fill="#40ff30"/><rect x="1170" y="127" width="8" height="8" fill="#60ff30"/><rect x="1178" y="127" width="8" height="8" fill="#70ff30"/><rect x="1186" y="127" width="8" height="8" fill="#90ff30"/><rect x="1194" y="127" width="8" height="8" fill="#b0ff30"/><rect x="1202" y="127" width="8" height="8" fill="#d0ff30"/><rect x="1210" y="127" width="8" height="8" fill="#f0ff30"/><rect x="1218" y="127" width="8" height="8" fill="#fff020"/><rect x="1226" y="127" width="8" height="8" fill="#ffd020"/><rect x="1234" y="127" width="8" height="8" fill="#ffc020"/><rect x="1242" y="127" width="8" height="8" fill="#ffa020"/><rect x="1250" y="127" width="8" height="8" fill="#ff9010"/><rect x="1258" y="127" width="16" height="8" fill="#ff8010"/><rect x="1274" y="127" width="8" height="8" fill="#ff7010"/><rect x="1282" y="127" width="16" height="8" fill="#ff6010"/><rect x="1298" y="127" width="8" height="8" fill="#ff5010"/><rect x="1306" y="127" width="8" height="8" fill="#ff5000"/><rect x="1314" y="127" width="24" height="8" fill="#ff4000"/><rect x="1338" y="127" width="24" height="8" fill="#ff3000"/><rect x="1362" y="127" width="72" height="8" fill="#a01000"/><rect x="1434" y="127" width="195" height="8" fill="#a00000"/><rect x="1010" y="135" width="136" height="8" fill="#00a030"/><rect x="1146" y="135" width="8" height="8" fill="#10ff40"/><rect x="1154" y="135" width="8" height="8" fill="#30ff40"/><rect x="1162" y="135" width="8" height="8" fill="#40ff40"/><rect x="1170" y="135" width="8" height="8" fill="#60ff40"/><rect x="1178" y="135" width="8" height="8" fill="#70ff40"/><rect x="1186" y="135" width="8" height="8" fill="#90ff40"/><rect x="1194" y="135" width="8" height="8" fill="#b0ff40"/><rect x="1202" y="135" width="8" height="8" fill="#d0ff40"/><rect x="1210" y="135" width="8" height="8" fill="#f0ff40"/><rect x="1218" y="135" width="8" height="8" fill="#fff040"/><rect x="1226" y="135" width="8" height="8" fill="#ffd040"/><rect x="1234" y="135" width="8" height="8" fill="#ffb030"/><rect x="1242" y="135" width="8" height="8" fill="#ffa030"/><rect x="1250" y="135" width="8" height="8" fill="#ff9020"/><rect x="1258" y="135" width="8" height="8" fill="#ff8020"/><rect x="1266" y="135" width="16" height="8" fill="#ff7020"/><rect x="1282" y="135" width="8" height="8" fill="#ff6020"/><rect x="1290" y="135" width="8" height="8" fill="#ff6010"/><rect x="1298" y="135" width="16" height="8" fill="#ff5010"/><rect x="1314" y="135" width="16" height="8" fill="#ff4010"/><rect x="1330" y="135" width="32" height="8" fill="#ff3010"/><rect x="1362" y="135" width="8" height="8" fill="#ff2010"/><rect x="1370" y="135" width="24" height="8" fill="#ff2000"/><rect x="1394" y="135" width="48" height="8" fill="#ff1000"/><rect x="1442" y="135" width="8" height="8" fill="#ff0000"/><rect x="1450" y="135" width="179" height="8" fill="#a00000"/><rect x="1010" y="143" width="96" height="8" fill="#00a030"/><rect x="1106" y="143" width="40" height="8" fill="#00a040"/><rect x="1146" y="143" width="8" height="8" fill="#10ff60"/><rect x="1154" y="143" width="8" height="8" fill="#20ff60"/><rect x="1162" y="143" width="8" height="8" fill="#40ff60"/><rect x="1170" y="143" width="8" height="8" fill="#60ff60"/><rect x="1178" y="143" width="8" height="8" fill="#70ff60"/><rect x="1186" y="143" width="8" height="8" fill="#90ff60"/><rect x="1194" y="143" width="8" height="8" fill="#b0ff60"/><rect x="1202" y="143" width="8" height="8" fill="#d0ff60"/><rect x="1210" y="143" width="8" height="8" fill="#f0ff60"/><rect x="1218" y="143" width="8" height="8" fill="#fff060"/><rect x="1226" y="143" width="8" height="8" fill="#ffd050"/><rect x="1234" y="143" width="8" height="8" fill="#ffb040"/><rect x="1242" y="143" width="8" height="8" fill="#ffa040"/><rect x="1250" y="143" width="8" height="8" fill="#ff9040"/><rect x="1258" y="143" width="8" height="8" fill="#ff8030"/><rect x="1266" y="143" width="16" height="8" fill="#ff7030"/><rect x="1282" y="143" width="8" height="8" fill="#ff6020"/><rect x="1290" y="143" width="16" height="8" fill="#ff5020"/><rect x="1306" y="143" width="24" height="8" fill="#ff4020"/><rect x="1330" y="143" width="24" height="8" fill="#ff3010"/><rect x="1354" y="143" width="32" height="8" fill="#ff2010"/><rect x="1386" y="143" width="48" height="8" fill="#ff1010"/><rect x="1434" y="143" width="32" height="8" fill="#ff0000"/><rect x="1466" y="143" width="163" height="8" fill="#a00000"/><rect x="1010" y="151" width="136" height="8" fill="#00a040"/><rect x="1146" y="151" width="8" height="8" fill="#10ff70"/><rect x="1154" y="151" width="8" height="8" fill="#20ff70"/><rect x="1162" y="151" width="8" height="8" fill="#40ff70"/><rect x="1170" y="151" width="8" height="8" fill="#50ff80"/><rect x="1178" y="151" width="8" height="8" fill="#70ff80"/><rect x="1186" y="151" width="8" height="8" fill="#90ff80"/><rect x="1194" y="151" width="8" height="8" fill="#b0ff80"/><rect x="1202" y="151" width="8" height="8" fill="#d0ff80"/><rect x="1210" y="151" width="8" height="8" fill="#f0ff80"/><rect x="1218" y="151" width="8" height="8" fill="#ffe070"/><rect x="1226" y="151" width="8" height="8" fill="#ffd060"/><rect x="1234" y="151" width="8" height="8" fill="#ffb060"/><rect x="1242" y="151" width="8" height="8" fill="#ffa050"/><rect x="1250" y="151" width="8" height="8" fill="#ff9050"/><rect x="1258" y="151" width="8" height="8" fill="#ff8040"/><rect x="1266" y="151" width="8" height="8" fill="#ff7040"/><rect x="1274" y="151" width="8" height="8" fill="#ff6040"/><rect x="1282" y="151" width="8" height="8" fill="#ff6030"/><rect x="1290" y="151" width="16" height="8" fill="#ff5030"/><rect x="1306" y="151" width="8" height="8" fill="#ff4030"/><rect x="1314" y="151" width="8" height="8" fill="#ff4020"/><rect x="1322" y="151" width="24" height="8" fill="#ff3020"/><rect x="1346" y="151" width="32" height="8" fill="#ff2020"/><rect x="1378" y="151" width="8" height="8" fill="#ff2010"/><rect x="1386" y="151" width="40" height="8" fill="#ff1010"/><rect x="1426" y="151" width="32" height="8" fill="#ff0010"/><rect x="1458" y="151" width="171" height="8" fill="#a00000"/><rect x="1010" y="159" width="136" height="8" fill="#00a050"/><rect x="1146" y="159" width="8" height="8" fill="#10ff90"/><rect x="1154" y="159" width="8" height="8" fill="#20ff90"/><rect x="1162" y="159" width="8" height="8" fill="#40ff90"/><rect x="1170" y="159" width="8" height="8" fill="#50ff90"/><rect x="1178" y="159" width="8" height="8" fill="#70ff90"/><rect x="1186" y="159" width="8" height="8" fill="#90ffa0"/><rect x="1194" y="159" width="8" height="8" fill="#b0ffa0"/><rect x="1202" y="159" width="8" height="8" fill="#d0ffa0"/><rect x="1210" y="159" width="8" height="8" fill="#ffffa0"/><rect x="1218" y="159" width="8" height="8" fill="#ffe090"/><rect x="1226" y="159" width="8" height="8" fill="#ffc080"/><rect x="1234" y="159" width="8" height="8" fill="#ffb070"/><rect x="1242" y="159" width="8" height="8" fill="#ffa060"/><rect x="1250" y="159" width="8" height="8" fill="#ff8060"/><rect x="1258" y="159" width="8" height="8" fill="#ff8050"/><rect x="1266" y="159" width="8" height="8" fill="#ff7050"/><rect x="1274" y="159" width="8" height="8" fill="#ff6050"/><rect x="1282" y="159" width="16" height="8" fill="#ff5040"/><rect x="1298" y="159" width="8" height="8" fill="#ff4040"/><rect x="1306" y="159" width="16" height="8" fill="#ff4030"/><rect x="1322" y="159" width="24" height="8" fill="#ff3030"/><rect x="1346" y="159" width="32" height="8" fill="#ff2020"/><rect x="1378" y="159" width="40" height="8" fill="#ff1020"/><rect x="1418" y="159" width="32" height="8" fill="#ff0010"/><rect x="1450" y="159" width="48" height="8" fill="#a00010"/><rect x="1498" y="159" width="131" height="8" fill="#a00000"/><rect x="1010" y="167" width="32" height="8" fill="#00a050"/><rect x="1042" y="167" width="104" height="8" fill="#00a060"/><rect x="1146" y="167" width="8" height="8" fill="#00ffb0"/><rect x="1154" y="167" width="8" height="8" fill="#20ffb0"/><rect x="1162" y="167" width="8" height="8" fill="#40ffb0"/><rect x="1170" y="167" width="8" height="8" fill="#50ffb0"/><rect x="1178" y="167" width="8" height="8" fill="#70ffb0"/><rect x="1186" y="167" width="8" height="8" fill="#90ffb0"/><rect x="1194" y="167" width="8" height="8" fill="#b0ffc0"/><rect x="1202" y="167" width="8" height="8" fill="#d0ffc0"/><rect x="1210" y="167" width="8" height="8" fill="#ffffc0"/><rect x="1218" y="167" width="8" height="8" fill="#ffe0b0"/><rect x="1226" y="167" width="8" height="8" fill="#ffc0a0"/><rect x="1234" y="167" width="8" height="8" fill="#ffb090"/><rect x="1242" y="167" width="8" height="8" fill="#ff9080"/><rect x="1250" y="167" width="8" height="8" fill="#ff8070"/><rect x="1258" y="167" width="16" height="8" fill="#ff7060"/><rect x="1274" y="167" width="8" height="8" fill="#ff6060"/><rect x="1282" y="167" width="16" height="8" fill="#ff5050"/><rect x="1298" y="167" width="16" height="8" fill="#ff4040"/><rect x="1314" y="167" width="16" height="8" fill="#ff3040"/><rect x="1330" y="167" width="8" height="8" fill="#ff3030"/><rect x="1338" y="167" width="32" height="8" fill="#ff2030"/><rect x="1370" y="167" width="8" height="8" fill="#ff1030"/><rect x="1378" y="167" width="40" height="8" fill="#ff1020"/><rect x="1418" y="167" width="24" height="8" fill="#ff0020"/><rect x="1442" y="167" width="112" height="8" fill="#a00010"/><rect x="1554" y="167" width="75" height="8" fill="#a00000"/><rect x="1010" y="175" width="64" height="8" fill="#00a060"/><rect x="1074" y="175" width="72" height="8" fill="#00a070"/><rect x="1146" y="175" width="8" height="8" fill="#00ffc0"/><rect x="1154" y="175" width="8" height="8" fill="#20ffc0"/><rect x="1162" y="175" width="8" height="8" fill="#30ffd0"/><rect x="1170" y="175" width="8" height="8" fill="#50ffd0"/><rect x="1178" y="175" width="8" height="8" fill="#70ffd0"/><rect x="1186" y="175" width="8" height="8" fill="#90ffd0"/><rect x="1194" y="175" width="8" height="8" fill="#b0ffe0"/><rect x="1202" y="175" width="8" height="8" fill="#e0ffe0"/><rect x="1210" y="175" width="8" height="8" fill="#ffffe0"/><rect x="1218" y="175" width="8" height="8" fill="#ffe0d0"/><rect x="1226" y="175" width="8" height="8" fill="#ffc0b0"/><rect x="1234" y="175" width="8" height="8" fill="#ffa0a0"/><rect x="1242" y="175" width="8" height="8" fill="#ff9090"/><rect x="1250" y="175" width="8" height="8" fill="#ff8080"/><rect x="1258" y="175" width="8" height="8" fill="#ff7080"/><rect x="1266" y="175" width="8" height="8" fill="#ff6070"/><rect x="1274" y="175" width="8" height="8" fill="#ff6060"/><rect x="1282" y="175" width="16" height="8" fill="#ff5060"/><rect x="1298" y="175" width="16" height="8" fill="#ff4050"/><rect x="1314" y="175" width="8" height="8" fill="#ff3050"/><rect x="1322" y="175" width="16" height="8" fill="#ff3040"/><rect x="1338" y="175" width="16" height="8" fill="#ff2040"/><rect x="1354" y="175" width="8" height="8" fill="#ff2030"/><rect x="1362" y="175" width="48" height="8" fill="#ff1030"/><rect x="1410" y="175" width="24" height="8" fill="#ff0020"/><rect x="1434" y="175" width="176" height="8" fill="#a00010"/><rect x="1610" y="175" width="19" height="8" fill="#a00000"/><rect x="1010" y="183" width="72" height="8" fill="#00a070"/><rect x="1082" y="183" width="64" height="8" fill="#00a080"/><rect x="1146" y="183" width="8" height="8" fill="#00a090"/><rect x="1154" y="183" width="8" height="8" fill="#10ffe0"/><rect x="1162" y="183" width="8" height="8" fill="#30fff0"/><rect x="1170" y="183" width="8" height="8" fill="#50fff0"/><rect x="1178" y="183" width="8" height="8" fill="#70fff0"/><rect x="1186" y="183" width="8" height="8" fill="#90ffff"/><rect x="1194" y="183" width="8" height="8" fill="#b0ffff"/><rect x="1202" y="183" width="8" height="8" fill="#d0f0ff"/><rect x="1210" y="183" width="8" height="8" fill="#f0f0ff"/><rect x="1218" y="183" width="8" height="8" fill="#ffd0e0"/><rect x="1226" y="183" width="8" height="8" fill="#ffc0d0"/><rect x="1234" y="183" width="8" height="8" fill="#ffa0c0"/><rect x="1242" y="183" width="8" height="8" fill="#ff90a0"/><rect x="1250" y="183" width="8" height="8" fill="#ff80a0"/><rect x="1258" y="183" width="8" height="8" fill="#ff7090"/><rect x="1266" y="183" width="8" height="8" fill="#ff6080"/><rect x="1274" y="183" width="16" height="8" fill="#ff5070"/><rect x="1290" y="183" width="16" height="8" fill="#ff4060"/><rect x="1306" y="183" width="8" height="8" fill="#ff3060"/><rect x="1314" y="183" width="16" height="8" fill="#ff3050"/><rect x="1330" y="183" width="16" height="8" fill="#ff2050"/><rect x="1346" y="183" width="16" height="8" fill="#ff2040"/><rect x="1362" y="183" width="16" height="8" fill="#ff1040"/><rect x="1378" y="183" width="24" height="8" fill="#ff1030"/><rect x="1402" y="183" width="24" height="8" fill="#ff0030"/><rect x="1426" y="183" width="16" height="8" fill="#a00020"/><rect x="1442" y="183" width="187" height="8" fill="#a00010"/><rect x="1010" y="191" width="8" height="8" fill="#00a070"/><rect x="1018" y="191" width="72" height="8" fill="#00a080"/><rect x="1090" y="191" width="48" height="8" fill="#00a090"/><rect x="1138" y="191" width="16" height="8" fill="#00a0a0"/><rect x="1154" y="191" width="8" height="8" fill="#10ffff"/><rect x="1162" y="191" width="8" height="8" fill="#30f0ff"/><rect x="1170" y="191" width="8" height="8" fill="#50f0ff"/><rect x="1178" y="191" width="8" height="8" fill="#60f0ff"/><rect x="1186" y="191" width="8" height="8" fill="#80e0ff"/><rect x="1194" y="191" width="8" height="8" fill="#a0e0ff"/><rect x="1202" y="191" width="8" height="8" fill="#c0d0ff"/><rect x="1210" y="191" width="8" height="8" fill="#e0d0ff"/><rect x="1218" y="191" width="8" height="8" fill="#f0d0ff"/><rect x="1226" y="191" width="8" height="8" fill="#ffb0f0"/><rect x="1234" y="191" width="8" height="8" fill="#ffa0d0"/><rect x="1242" y="191" width="8" height="8" fill="#ff90c0"/><rect x="1250" y="191" width="8" height="8" fill="#ff80b0"/><rect x="1258" y="191" width="8" height="8" fill="#ff70a0"/><rect x="1266" y="191" width="8" height="8" fill="#ff6090"/><rect x="1274" y="191" width="16" height="8" fill="#ff5080"/><rect x="1290" y="191" width="16" height="8" fill="#ff4070"/><rect x="1306" y="191" width="16" height="8" fill="#ff3060"/><rect x="1322" y="191" width="8" height="8" fill="#ff2060"/><rect x="1330" y="191" width="24" height="8" fill="#ff2050"/><rect x="1354" y="191" width="8" height="8" fill="#ff1050"/><rect x="1362" y="191" width="32" height="8" fill="#ff1040"/><rect x="1394" y="191" width="16" height="8" fill="#ff0040"/><rect x="1410" y="191" width="8" height="8" fill="#ff0030"/><rect x="1418" y="191" width="56" height="8" fill="#a00020"/><rect x="1474" y="191" width="155" height="8" fill="#a00010"/><rect x="1010" y="199" width="24" height="8" fill="#00a080"/><rect x="1034" y="199" width="56" height="8" fill="#00a090"/><rect x="1090" y="199" width="24" height="8" fill="#00a0a0"/><rect x="1114" y="199" width="40" height="8" fill="#0090a0"/><rect x="1154" y="199" width="8" height="8" fill="#10e0ff"/><rect x="1162" y="199" width="8" height="8" fill="#20d0ff"/><rect x="1170" y="199" width="8" height="8" fill="#40d0ff"/><rect x="1178" y="199" width="8" height="8" fill="#50d0ff"/><rect x="1186" y="199" width="8" height="8" fill="#70c0ff"/><rect x="1194" y="199" width="8" height="8" fill="#90c0ff"/><rect x="1202" y="199" width="8" height="8" fill="#a0c0ff"/><rect x="1210" y="199" width="8" height="8" fill="#c0b0ff"/><rect x="1218" y="199" width="8" height="8" fill="#e0b0ff"/><rect x="1226" y="199" width="8" height="8" fill="#ffb0ff"/><rect x="1234" y="199" width="8" height="8" fill="#ff90f0"/><rect x="1242" y="199" width="8" height="8" fill="#ff80d0"/><rect x="1250" y="199" width="8" height="8" fill="#ff70c0"/><rect x="1258" y="199" width="8" height="8" fill="#ff60b0"/><rect x="1266" y="199" width="8" height="8" fill="#ff60a0"/><rect x="1274" y="199" width="8" height="8" fill="#ff50a0"/><rect x="1282" y="199" width="8" height="8" fill="#ff4090"/><rect x="1290" y="199" width="8" height="8" fill="#ff4080"/><rect x="1298" y="199" width="8" height="8" fill="#ff3080"/><rect x="1306" y="199" width="16" height="8" fill="#ff3070"/><rect x="1322" y="199" width="24" height="8" fill="#ff2060"/><rect x="1346" y="199" width="8" height="8" fill="#ff1060"/><rect x="1354" y="199" width="32" height="8" fill="#ff1050"/><rect x="1386" y="199" width="24" height="8" fill="#ff0040"/><rect x="1410" y="199" width="96" height="8" fill="#a00020"/><rect x="1506" y="199" width="123" height="8" fill="#a00010"/><rect x="1010" y="207" width="32" height="8" fill="#00a090"/><rect x="1042" y="207" width="24" height="8" fill="#00a0a0"/><rect x="1066" y="207" width="48" height="8" fill="#0090a0"/><rect x="1114" y="207" width="40" height="8" fill="#0080a0"/><rect x="1154" y="207" width="8" height="8" fill="#10c0ff"/><rect x="1162" y="207" width="8" height="8" fill="#20c0ff"/><rect x="1170" y="207" width="8" height="8" fill="#30c0ff"/><rect x="1178" y="207" width="8" height="8" fill="#50b0ff"/><rect x="1186" y="207" width="8" height="8" fill="#60b0ff"/><rect x="1194" y="207" width="8" height="8" fill="#80b0ff"/><rect x="1202" y="207" width="8" height="8" fill="#90a0ff"/><rect x="1210" y="207" width="8" height="8" fill="#b0a0ff"/><rect x="1218" y="207" width="8" height="8" fill="#c0a0ff"/><rect x="1226" y="207" width="8" height="8" fill="#e090ff"/><rect x="1234" y="207" width="8" height="8" fill="#ff90ff"/><rect x="1242" y="207" width="8" height="8" fill="#ff80f0"/><rect x="1250" y="207" width="8" height="8" fill="#ff70d0"/><rect x="1258" y="207" width="8" height="8" fill="#ff60c0"/><rect x="1266" y="207" width="16" height="8" fill="#ff50b0"/><rect x="1282" y="207" width="8" height="8" fill="#ff40a0"/><rect x="1290" y="207" width="8" height="8" fill="#ff4090"/><rect x="1298" y="207" width="8" height="8" fill="#ff3090"/><rect x="1306" y="207" width="8" height="8" fill="#ff3080"/><rect x="1314" y="207" width="8" height="8" fill="#ff2080"/><rect x="1322" y="207" width="24" height="8" fill="#ff2070"/><rect x="1346" y="207" width="24" height="8" fill="#ff1060"/><rect x="1370" y="207" width="8" height="8" fill="#ff1050"/><rect x="1378" y="207" width="24" height="8" fill="#ff0050"/><rect x="1402" y="207" width="24" height="8" fill="#a00030"/><rect x="1426" y="207" width="112" height="8" fill="#a00020"/><rect x="1538" y="207" width="91" height="8" fill="#a00010"/><rect x="1010" y="215" width="8" height="8" fill="#00a0a0"/><rect x="1018" y="215" width="56" height="8" fill="#0090a0"/><rect x="1074" y="215" width="48" height="8" fill="#0080a0"/><rect x="1122" y="215" width="32" height="8" fill="#0070a0"/><rect x="1154" y="215" width="8" height="8" fill="#00b0ff"/><rect x="1162" y="215" width="8" height="8" fill="#20b0ff"/><rect x="1170" y="215" width="8" height="8" fill="#30a0ff"/><rect x="1178" y="215" width="8" height="8" fill="#40a0ff"/><rect x="1186" y="215" width="8" height="8" fill="#60a0ff"/><rect x="1194" y="215" width="8" height="8" fill="#7090ff"/><rect x="1202" y="215" width="8" height="8" fill="#8090ff"/><rect x="1210" y="215" width="8" height="8" fill="#a090ff"/><rect x="1218" y="215" width="8" height="8" fill="#b090ff"/><rect x="1226" y="215" width="8" height="8" fill="#d080ff"/><rect x="1234" y="215" width="8" height="8" fill="#e080ff"/><rect x="1242" y="215" width="8" height="8" fill="#ff80ff"/><rect x="1250" y="215" width="8" height="8" fill="#ff70f0"/><rect x="1258" y="215" width="8" height="8" fill="#ff60e0"/><rect x="1266" y="215" width="8" height="8" fill="#ff50d0"/><rect x="1274" y="215" width="8" height="8" fill="#ff40c0"/><rect x="1282" y="215" width="8" height="8" fill="#ff40b0"/><rect x="1290" y="215" width="16" height="8" fill="#ff30a0"/><rect x="1306" y="215" width="8" height="8" fill="#ff3090"/><rect x="1314" y="215" width="24" height="8" fill="#ff2080"/><rect x="1338" y="215" width="24" height="8" fill="#ff1070"/><rect x="1362" y="215" width="8" height="8" fill="#ff1060"/><rect x="1370" y="215" width="16" height="8" fill="#ff0060"/><rect x="1386" y="215" width="8" height="8" fill="#ff0050"/><rect x="1394" y="215" width="56" height="8" fill="#a00030"/><rect x="1450" y="215" width="120" height="8" fill="#a00020"/><rect x="1570" y="215" width="59" height="8" fill="#a00010"/><rect x="1010" y="223" width="24" height="8" fill="#0090a0"/><rect x="1034" y="223" width="48" height="8" fill="#0080a0"/><rect x="1082" y="223" width="56" height="8" fill="#0070a0"/><rect x="1138" y="223" width="16" height="8" fill="#0060a0"/><rect x="1154" y="223" width="8" height="8" fill="#00a0ff"/><rect x="1162" y="223" width="8" height="8" fill="#10a0ff"/><rect x="1170" y="223" width="8" height="8" fill="#3090ff"/><rect x="1178" y="223" width="8" height="8" fill="#4090ff"/><rect x="1186" y="223" width="8" height="8" fill="#5090ff"/><rect x="1194" y="223" width="8" height="8" fill="#6080ff"/><rect x="1202" y="223" width="8" height="8" fill="#8080ff"/><rect x="1210" y="223" width="8" height="8" fill="#9080ff"/><rect x="1218" y="223" width="8" height="8" fill="#a080ff"/><rect x="1226" y="223" width="8" height="8" fill="#b070ff"/><rect x="1234" y="223" width="8" height="8" fill="#d070ff"/><rect x="1242" y="223" width="8" height="8" fill="#e070ff"/><rect x="1250" y="223" width="8" height="8" fill="#ff60ff"/><rect x="1258" y="223" width="8" height="8" fill="#ff60f0"/><rect x="1266" y="223" width="8" height="8" fill="#ff50e0"/><rect x="1274" y="223" width="8" height="8" fill="#ff40d0"/><rect x="1282" y="223" width="8" height="8" fill="#ff40c0"/><rect x="1290" y="223" width="8" height="8" fill="#ff30b0"/><rect x="1298" y="223" width="8" height="8" fill="#ff30a0"/><rect x="1306" y="223" width="8" height="8" fill="#ff20a0"/><rect x="1314" y="223" width="16" height="8" fill="#ff2090"/><rect x="1330" y="223" width="16" height="8" fill="#ff1080"/><rect x="1346" y="223" width="24" height="8" fill="#ff1070"/><rect x="1370" y="223" width="8" height="8" fill="#ff0070"/><rect x="1378" y="223" width="8" height="8" fill="#ff0060"/><rect x="1386" y="223" width="8" height="8" fill="#a00040"/><rect x="1394" y="223" width="72" height="8" fill="#a00030"/><rect x="1466" y="223" width="136" height="8" fill="#a00020"/><rect x="1602" y="223" width="27" height="8" fill="#a00010"/><rect x="1010" y="231" width="40" height="8" fill="#0080a0"/><rect x="1050" y="231" width="56" height="8" fill="#0070a0"/><rect x="1106" y="231" width="48" height="8" fill="#0060a0"/><rect x="1154" y="231" width="8" height="8" fill="#0050a0"/><rect x="1162" y="231" width="8" height="8" fill="#1090ff"/><rect x="1170" y="231" width="8" height="8" fill="#2080ff"/><rect x="1178" y="231" width="8" height="8" fill="#3080ff"/><rect x="1186" y="231" width="8" height="8" fill="#4080ff"/><rect x="1194" y="231" width="8" height="8" fill="#6080ff"/><rect x="1202" y="231" width="8" height="8" fill="#7070ff"/><rect x="1210" y="231" width="8" height="8" fill="#8070ff"/><rect x="1218" y="231" width="8" height="8" fill="#9070ff"/><rect x="1226" y="231" width="8" height="8" fill="#a060ff"/><rect x="1234" y="231" width="8" height="8" fill="#c060ff"/><rect x="1242" y="231" width="8" height="8" fill="#d060ff"/><rect x="1250" y="231" width="8" height="8" fill="#e050ff"/><rect x="1258" y="231" width="8" height="8" fill="#ff50ff"/><rect x="1266" y="231" width="8" height="8" fill="#ff50f0"/><rect x="1274" y="231" width="8" height="8" fill="#ff40e0"/><rect x="1282" y="231" width="8" height="8" fill="#ff30d0"/><rect x="1290" y="231" width="8" height="8" fill="#ff30c0"/><rect x="1298" y="231" width="8" height="8" fill="#ff30b0"/><rect x="1306" y="231" width="8" height="8" fill="#ff20b0"/><rect x="1314" y="231" width="16" height="8" fill="#ff20a0"/><rect x="1330" y="231" width="16" height="8" fill="#ff1090"/><rect x="1346" y="231" width="16" height="8" fill="#ff1080"/><rect x="1362" y="231" width="16" height="8" fill="#ff0070"/><rect x="1378" y="231" width="40" height="8" fill="#a00040"/><rect x="1418" y="231" width="72" height="8" fill="#a00030"/><rect x="1490" y="231" width="139" height="8" fill="#a00020"/><rect x="1010" y="239" width="64" height="8" fill="#0070a0"/><rect x="1074" y="239" width="56" height="8" fill="#0060a0"/><rect x="1130" y="239" width="32" height="8" fill="#0050a0"/><rect x="1162" y="239" width="8" height="8" fill="#1080ff"/><rect x="1170" y="239" width="8" height="8" fill="#2080ff"/><rect x="1178" y="239" width="8" height="8" fill="#3070ff"/><rect x="1186" y="239" width="8" height="8" fill="#4070ff"/><rect x="1194" y="239" width="8" height="8" fill="#5070ff"/><rect x="1202" y="239" width="8" height="8" fill="#6070ff"/><rect x="1210" y="239" width="8" height="8" fill="#7060ff"/><rect x="1218" y="239" width="8" height="8" fill="#8060ff"/><rect x="1226" y="239" width="8" height="8" fill="#a060ff"/><rect x="1234" y="239" width="8" height="8" fill="#b050ff"/><rect x="1242" y="239" width="8" height="8" fill="#c050ff"/><rect x="1250" y="239" width="8" height="8" fill="#d050ff"/><rect x="1258" y="239" width="8" height="8" fill="#e050ff"/><rect x="1266" y="239" width="8" height="8" fill="#ff40ff"/><rect x="1274" y="239" width="8" height="8" fill="#ff40f0"/><rect x="1282" y="239" width="8" height="8" fill="#ff30e0"/><rect x="1290" y="239" width="8" height="8" fill="#ff30d0"/><rect x="1298" y="239" width="16" height="8" fill="#ff20c0"/><rect x="1314" y="239" width="8" height="8" fill="#ff20b0"/><rect x="1322" y="239" width="16" height="8" fill="#ff10a0"/><rect x="1338" y="239" width="16" height="8" fill="#ff1090"/><rect x="1354" y="239" width="16" height="8" fill="#ff0080"/><rect x="1370" y="239" width="8" height="8" fill="#a00050"/><rect x="1378" y="239" width="56" height="8" fill="#a00040"/><rect x="1434" y="239" width="80" height="8" fill="#a00030"/><rect x="1514" y="239" width="115" height="8" fill="#a00020"/><rect x="1010" y="247" width="32" height="8" fill="#0070a0"/><rect x="1042" y="247" width="56" height="8" fill="#0060a0"/><rect x="1098" y="247" width="56" height="8" fill="#0050a0"/><rect x="1154" y="247" width="8" height="8" fill="#0040a0"/><rect x="1162" y="247" width="8" height="8" fill="#1070ff"/><rect x="1170" y="247" width="8" height="8" fill="#2070ff"/><rect x="1178" y="247" width="8" height="8" fill="#3070ff"/><rect x="1186" y="247" width="8" height="8" fill="#4060ff"/><rect x="1194" y="247" width="8" height="8" fill="#5060ff"/><rect x="1202" y="247" width="8" height="8" fill="#6060ff"/><rect x="1210" y="247" width="8" height="8" fill="#7060ff"/><rect x="1218" y="247" width="8" height="8" fill="#8050ff"/><rect x="1226" y="247" width="8" height="8" fill="#9050ff"/><rect x="1234" y="247" width="8" height="8" fill="#a050ff"/><rect x="1242" y="247" width="8" height="8" fill="#b050ff"/><rect x="1250" y="247" width="8" height="8" fill="#c040ff"/><rect x="1258" y="247" width="8" height="8" fill="#d040ff"/><rect x="1266" y="247" width="8" height="8" fill="#e040ff"/><rect x="1274" y="247" width="8" height="8" fill="#ff30ff"/><rect x="1282" y="247" width="8" height="8" fill="#ff30f0"/><rect x="1290" y="247" width="8" height="8" fill="#ff20e0"/><rect x="1298" y="247" width="8" height="8" fill="#ff20d0"/><rect x="1306" y="247" width="8" height="8" fill="#ff20c0"/><rect x="1314" y="247" width="8" height="8" fill="#ff10c0"/><rect x="1322" y="247" width="16" height="8" fill="#ff10b0"/><rect x="1338" y="247" width="8" height="8" fill="#ff10a0"/><rect x="1346" y="247" width="8" height="8" fill="#ff00a0"/><rect x="1354" y="247" width="8" height="8" fill="#ff0090"/><rect x="1362" y="247" width="32" height="8" fill="#a00050"/><rect x="1394" y="247" width="56" height="8" fill="#a00040"/><rect x="1450" y="247" width="88" height="8" fill="#a00030"/><rect x="1538" y="247" width="91" height="8" fill="#a00020"/><rect x="1010" y="255" width="64" height="8" fill="#0060a0"/><rect x="1074" y="255" width="64" height="8" fill="#0050a0"/><rect x="1138" y="255" width="24" height="8" fill="#0040a0"/><rect x="1162" y="255" width="8" height="8" fill="#0060ff"/><rect x="1170" y="255" width="8" height="8" fill="#1060ff"/><rect x="1178" y="255" width="8" height="8" fill="#2060ff"/><rect x="1186" y="255" width="8" height="8" fill="#3060ff"/><rect x="1194" y="255" width="8" height="8" fill="#4050ff"/><rect x="1202" y="255" width="8" height="8" fill="#5050ff"/><rect x="1210" y="255" width="8" height="8" fill="#6050ff"/><rect x="1218" y="255" width="8" height="8" fill="#7050ff"/><rect x="1226" y="255" width="8" height="8" fill="#8040ff"/><rect x="1234" y="255" width="8" height="8" fill="#9040ff"/><rect x="1242" y="255" width="8" height="8" fill="#a040ff"/><rect x="1250" y="255" width="8" height="8" fill="#b040ff"/><rect x="1258" y="255" width="8" height="8" fill="#c030ff"/><rect x="1266" y="255" width="8" height="8" fill="#d030ff"/><rect x="1274" y="255" width="8" height="8" fill="#f030ff"/><rect x="1282" y="255" width="8" height="8" fill="#ff30ff"/><rect x="1290" y="255" width="8" height="8" fill="#ff20f0"/><rect x="1298" y="255" width="8" height="8" fill="#ff20e0"/><rect x="1306" y="255" width="16" height="8" fill="#ff10d0"/><rect x="1322" y="255" width="8" height="8" fill="#ff10c0"/><rect x="1330" y="255" width="8" height="8" fill="#ff10b0"/><rect x="1338" y="255" width="8" height="8" fill="#ff00b0"/><rect x="1346" y="255" width="8" height="8" fill="#ff00a0"/><rect x="1354" y="255" width="16" height="8" fill="#a00060"/><rect x="1370" y="255" width="40" height="8" fill="#a00050"/><rect x="1410" y="255" width="56" height="8" fill="#a00040"/><rect x="1466" y="255" width="96" height="8" fill="#a00030"/><rect x="1562" y="255" width="67" height="8" fill="#a00020"/><rect x="1010" y="263" width="40" height="8" fill="#0060a0"/><rect x="1050" y="263" width="64" height="8" fill="#0050a0"/><rect x="1114" y="263" width="48" height="8" fill="#0040a0"/><rect x="1162" y="263" width="8" height="8" fill="#0060ff"/><rect x="1170" y="263" width="8" height="8" fill="#1060ff"/><rect x="1178" y="263" width="8" height="8" fill="#2050ff"/><rect x="1186" y="263" width="8" height="8" fill="#3050ff"/><rect x="1194" y="263" width="8" height="8" fill="#4050ff"/><rect x="1202" y="263" width="8" height="8" fill="#5050ff"/><rect x="1210" y="263" width="8" height="8" fill="#6040ff"/><rect x="1218" y="263" width="8" height="8" fill="#7040ff"/><rect x="1226" y="263" width="8" height="8" fill="#8040ff"/><rect x="1234" y="263" width="8" height="8" fill="#9040ff"/><rect x="1242" y="263" width="8" height="8" fill="#a030ff"/><rect x="1250" y="263" width="8" height="8" fill="#b030ff"/><rect x="1258" y="263" width="8" height="8" fill="#c030ff"/><rect x="1266" y="263" width="8" height="8" fill="#d030ff"/><rect x="1274" y="263" width="8" height="8" fill="#e020ff"/><rect x="1282" y="263" width="8" height="8" fill="#f020ff"/><rect x="1290" y="263" width="8" height="8" fill="#ff20ff"/><rect x="1298" y="263" width="8" height="8" fill="#ff20f0"/><rect x="1306" y="263" width="8" height="8" fill="#ff10e0"/><rect x="1314" y="263" width="16" height="8" fill="#ff10d0"/><rect x="1330" y="263" width="8" height="8" fill="#ff00c0"/><rect x="1338" y="263" width="8" height="8" fill="#ff00b0"/><rect x="1346" y="263" width="8" height="8" fill="#a00070"/><rect x="1354" y="263" width="32" height="8" fill="#a00060"/><rect x="1386" y="263" width="40" height="8" fill="#a00050"/><rect x="1426" y="263" width="56" height="8" fill="#a00040"/><rect x="1482" y="263" width="104" height="8" fill="#a00030"/><rect x="1586" y="263" width="43" height="8" fill="#a00020"/><rect x="1010" y="271" width="8" height="8" fill="#0060a0"/><rect x="1018" y="271" width="72" height="8" fill="#0050a0"/><rect x="1090" y="271" width="64" height="8" fill="#0040a0"/><rect x="1154" y="271" width="8" height="8" fill="#0030a0"/><rect x="1162" y="271" width="8" height="8" fill="#0050ff"/><rect x="1170" y="271" width="8" height="8" fill="#1050ff"/><rect x="1178" y="271" width="8" height="8" fill="#2050ff"/><rect x="1186" y="271" width="8" height="8" fill="#3050ff"/><rect x="1194" y="271" width="16" height="8" fill="#4040ff"/><rect x="1210" y="271" width="8" height="8" fill="#5040ff"/><rect x="1218" y="271" width="8" height="8" fill="#6040ff"/><rect x="1226" y="271" width="8" height="8" fill="#7040ff"/><rect x="1234" y="271" width="8" height="8" fill="#8030ff"/><rect x="1242" y="271" width="8" height="8" fill="#9030ff"/><rect x="1250" y="271" width="8" height="8" fill="#a030ff"/><rect x="1258" y="271" width="8" height="8" fill="#b030ff"/><rect x="1266" y="271" width="8" height="8" fill="#c020ff"/><rect x="1274" y="271" width="8" height="8" fill="#d020ff"/><rect x="1282" y="271" width="8" height="8" fill="#e020ff"/><rect x="1290" y="271" width="8" height="8" fill="#f020ff"/><rect x="1298" y="271" width="8" height="8" fill="#ff10ff"/><rect x="1306" y="271" width="8" height="8" fill="#ff10f0"/><rect x="1314" y="271" width="8" height="8" fill="#ff10e0"/><rect x="1322" y="271" width="8" height="8" fill="#ff00e0"/><rect x="1330" y="271" width="8" height="8" fill="#ff00d0"/><rect x="1338" y="271" width="24" height="8" fill="#a00070"/><rect x="1362" y="271" width="32" height="8" fill="#a00060"/><rect x="1394" y="271" width="48" height="8" fill="#a00050"/><rect x="1442" y="271" width="64" height="8" fill="#a00040"/><rect x="1506" y="271" width="96" height="8" fill="#a00030"/><rect x="1602" y="271" width="27" height="8" fill="#a00020"/><rect x="1010" y="279" width="56" height="8" fill="#0050a0"/><rect x="1066" y="279" width="64" height="8" fill="#0040a0"/><rect x="1130" y="279" width="40" height="8" fill="#0030a0"/><rect x="1170" y="279" width="8" height="8" fill="#1050ff"/><rect x="1178" y="279" width="16" height="8" fill="#2040ff"/><rect x="1194" y="279" width="8" height="8" fill="#3040ff"/><rect x="1202" y="279" width="8" height="8" fill="#4040ff"/><rect x="1210" y="279" width="8" height="8" fill="#5040ff"/><rect x="1218" y="279" width="8" height="8" fill="#6030ff"/><rect x="1226" y="279" width="16" height="8" fill="#7030ff"/><rect x="1242" y="279" width="8" height="8" fill="#8030ff"/><rect x="1250" y="279" width="8" height="8" fill="#9020ff"/><rect x="1258" y="279" width="8" height="8" fill="#a020ff"/><rect x="1266" y="279" width="8" height="8" fill="#b020ff"/><rect x="1274" y="279" width="8" height="8" fill="#c020ff"/><rect x="1282" y="279" width="8" height="8" fill="#d010ff"/><rect x="1290" y="279" width="8" height="8" fill="#e010ff"/><rect x="1298" y="279" width="8" height="8" fill="#f010ff"/><rect x="1306" y="279" width="8" height="8" fill="#ff10ff"/><rect x="1314" y="279" width="8" height="8" fill="#ff00f0"/><rect x="1322" y="279" width="16" height="8" fill="#ff00e0"/><rect x="1338" y="279" width="16" height="8" fill="#a00080"/><rect x="1354" y="279" width="24" height="8" fill="#a00070"/><rect x="1378" y="279" width="32" height="8" fill="#a00060"/><rect x="1410" y="279" width="48" height="8" fill="#a00050"/><rect x="1458" y="279" width="64" height="8" fill="#a00040"/><rect x="1522" y="279" width="104" height="8" fill="#a00030"/><rect x="1626" y="279" width="3" height="8" fill="#a00020"/><rect x="1010" y="287" width="32" height="8" fill="#0050a0"/><rect x="1042" y="287" width="72" height="8" fill="#0040a0"/><rect x="1114" y="287" width="56" height="8" fill="#0030a0"/><rect x="1170" y="287" width="16" height="8" fill="#1040ff"/><rect x="1186" y="287" width="8" height="8" fill="#2040ff"/><rect x="1194" y="287" width="8" height="8" fill="#3040ff"/><rect x="1202" y="287" width="8" height="8" fill="#4030ff"/><rect x="1210" y="287" width="16" height="8" fill="#5030ff"/><rect x="1226" y="287" width="8" height="8" fill="#6030ff"/><rect x="1234" y="287" width="8" height="8" fill="#7030ff"/><rect x="1242" y="287" width="8" height="8" fill="#8020ff"/><rect x="1250" y="287" width="8" height="8" fill="#9020ff"/><rect x="1258" y="287" width="16" height="8" fill="#a020ff"/><rect x="1274" y="287" width="8" height="8" fill="#b010ff"/><rect x="1282" y="287" width="8" height="8" fill="#c010ff"/><rect x="1290" y="287" width="8" height="8" fill="#d010ff"/><rect x="1298" y="287" width="8" height="8" fill="#e010ff"/><rect x="1306" y="287" width="8" height="8" fill="#f000ff"/><rect x="1314" y="287" width="8" height="8" fill="#ff00ff"/><rect x="1322" y="287" width="8" height="8" fill="#ff00f0"/><rect x="1330" y="287" width="8" height="8" fill="#a00090"/><rect x="1338" y="287" width="24" height="8" fill="#a00080"/><rect x="1362" y="287" width="24" height="8" fill="#a00070"/><rect x="1386" y="287" width="32" height="8" fill="#a00060"/><rect x="1418" y="287" width="48" height="8" fill="#a00050"/><rect x="1466" y="287" width="72" height="8" fill="#a00040"/><rect x="1538" y="287" width="91" height="8" fill="#a00030"/><rect x="1010" y="295" width="8" height="8" fill="#0050a0"/><rect x="1018" y="295" width="80" height="8" fill="#0040a0"/><rect x="1098" y="295" width="64" height="8" fill="#0030a0"/><rect x="1162" y="295" width="8" height="8" fill="#0020a0"/><rect x="1170" y="295" width="8" height="8" fill="#0040ff"/><rect x="1178" y="295" width="8" height="8" fill="#1040ff"/><rect x="1186" y="295" width="8" height="8" fill="#2030ff"/><rect x="1194" y="295" width="16" height="8" fill="#3030ff"/><rect x="1210" y="295" width="8" height="8" fill="#4030ff"/><rect x="1218" y="295" width="8" height="8" fill="#5030ff"/><rect x="1226" y="295" width="8" height="8" fill="#6020ff"/><rect x="1234" y="295" width="16" height="8" fill="#7020ff"/><rect x="1250" y="295" width="8" height="8" fill="#8020ff"/><rect x="1258" y="295" width="8" height="8" fill="#9020ff"/><rect x="1266" y="295" width="8" height="8" fill="#a010ff"/><rect x="1274" y="295" width="16" height="8" fill="#b010ff"/><rect x="1290" y="295" width="8" height="8" fill="#c010ff"/><rect x="1298" y="295" width="8" height="8" fill="#d000ff"/><rect x="1306" y="295" width="8" height="8" fill="#e000ff"/><rect x="1314" y="295" width="8" height="8" fill="#f000ff"/><rect x="1322" y="295" width="8" height="8" fill="#a000a0"/><rect x="1330" y="295" width="16" height="8" fill="#a00090"/><rect x="1346" y="295" width="24" height="8" fill="#a00080"/><rect x="1370" y="295" width="32" height="8" fill="#a00070"/><rect x="1402" y="295" width="32" height="8" fill="#a00060"/><rect x="1434" y="295" width="48" height="8" fill="#a00050"/><rect x="1482" y="295" width="72" height="8" fill="#a00040"/><rect x="1554" y="295" width="75" height="8" fill="#a00030"/><rect x="1010" y="303" width="64" height="8" fill="#0040a0"/><rect x="1074" y="303" width="72" height="8" fill="#0030a0"/><rect x="1146" y="303" width="24" height="8" fill="#0020a0"/><rect x="1170" y="303" width="8" height="8" fill="#0030ff"/><rect x="1178" y="303" width="8" height="8" fill="#1030ff"/><rect x="1186" y="303" width="16" height="8" fill="#2030ff"/><rect x="1202" y="303" width="8" height="8" fill="#3030ff"/><rect x="1210" y="303" width="8" height="8" fill="#4030ff"/><rect x="1218" y="303" width="16" height="8" fill="#5020ff"/><rect x="1234" y="303" width="8" height="8" fill="#6020ff"/><rect x="1242" y="303" width="8" height="8" fill="#7020ff"/><rect x="1250" y="303" width="8" height="8" fill="#8020ff"/><rect x="1258" y="303" width="8" height="8" fill="#8010ff"/><rect x="1266" y="303" width="8" height="8" fill="#9010ff"/><rect x="1274" y="303" width="8" height="8" fill="#a010ff"/><rect x="1282" y="303" width="8" height="8" fill="#b010ff"/><rect x="1290" y="303" width="16" height="8" fill="#c000ff"/><rect x="1306" y="303" width="8" height="8" fill="#d000ff"/><rect x="1314" y="303" width="16" height="8" fill="#9000a0"/><rect x="1330" y="303" width="8" height="8" fill="#a000a0"/><rect x="1338" y="303" width="24" height="8" fill="#a00090"/><rect x="1362" y="303" width="16" height="8" fill="#a00080"/><rect x="1378" y="303" width="32" height="8" fill="#a00070"/><rect x="1410" y="303" width="40" height="8" fill="#a00060"/><rect x="1450" y="303" width="48" height="8" fill="#a00050"/><rect x="1498" y="303" width="80" height="8" fill="#a00040"/><rect x="1578" y="303" width="51" height="8" fill="#a00030"/><rect x="1010" y="311" width="48" height="8" fill="#0040a0"/><rect x="1058" y="311" width="72" height="8" fill="#0030a0"/><rect x="1130" y="311" width="40" height="8" fill="#0020a0"/><rect x="1170" y="311" width="8" height="8" fill="#0030ff"/><rect x="1178" y="311" width="8" height="8" fill="#1030ff"/><rect x="1186" y="311" width="16" height="8" fill="#2030ff"/><rect x="1202" y="311" width="8" height="8" fill="#3020ff"/><rect x="1210" y="311" width="16" height="8" fill="#4020ff"/><rect x="1226" y="311" width="8" height="8" fill="#5020ff"/><rect x="1234" y="311" width="8" height="8" fill="#6020ff"/><rect x="1242" y="311" width="16" height="8" fill="#7010ff"/><rect x="1258" y="311" width="8" height="8" fill="#8010ff"/><rect x="1266" y="311" width="16" height="8" fill="#9010ff"/><rect x="1282" y="311" width="8" height="8" fill="#a000ff"/><rect x="1290" y="311" width="8" height="8" fill="#b000ff"/><rect x="1298" y="311" width="8" height="8" fill="#c000ff"/><rect x="1306" y="311" width="16" height="8" fill="#8000a0"/><rect x="1322" y="311" width="16" height="8" fill="#9000a0"/><rect x="1338" y="311" width="8" height="8" fill="#a000a0"/><rect x="1346" y="311" width="24" height="8" fill="#a00090"/><rect x="1370" y="311" width="24" height="8" fill="#a00080"/><rect x="1394" y="311" width="24" height="8" fill="#a00070"/><rect x="1418" y="311" width="40" height="8" fill="#a00060"/><rect x="1458" y="311" width="56" height="8" fill="#a00050"/><rect x="1514" y="311" width="80" height="8" fill="#a00040"/><rect x="1594" y="311" width="35" height="8" fill="#a00030"/><rect x="1010" y="319" width="24" height="8" fill="#0040a0"/><rect x="1034" y="319" width="80" height="8" fill="#0030a0"/><rect x="1114" y="319" width="56" height="8" fill="#0020a0"/><rect x="1170" y="319" width="8" height="8" fill="#0030ff"/><rect x="1178" y="319" width="8" height="8" fill="#1030ff"/><rect x="1186" y="319" width="8" height="8" fill="#1020ff"/><rect x="1194" y="319" width="8" height="8" fill="#2020ff"/><rect x="1202" y="319" width="16" height="8" fill="#3020ff"/><rect x="1218" y="319" width="8" height="8" fill="#4020ff"/><rect x="1226" y="319" width="8" height="8" fill="#5020ff"/><rect x="1234" y="319" width="8" height="8" fill="#5010ff"/><rect x="1242" y="319" width="8" height="8" fill="#6010ff"/><rect x="1250" y="319" width="8" height="8" fill="#7010ff"/><rect x="1258" y="319" width="16" height="8" fill="#8010ff"/><rect x="1274" y="319" width="8" height="8" fill="#9000ff"/><rect x="1282" y="319" width="16" height="8" fill="#a000ff"/><rect x="1298" y="319" width="16" height="8" fill="#7000a0"/><rect x="1314" y="319" width="16" height="8" fill="#8000a0"/><rect x="1330" y="319" width="16" height="8" fill="#9000a0"/><rect x="1346" y="319" width="8" height="8" fill="#a000a0"/><rect x="1354" y="319" width="24" height="8" fill="#a00090"/><rect x="1378" y="319" width="24" height="8" fill="#a00080"/><rect x="1402" y="319" width="32" height="8" fill="#a00070"/><rect x="1434" y="319" width="40" height="8" fill="#a00060"/><rect x="1474" y="319" width="56" height="8" fill="#a00050"/><rect x="1530" y="319" width="80" height="8" fill="#a00040"/><rect x="1610" y="319" width="19" height="8" fill="#a00030"/><rect x="1010" y="327" width="8" height="8" fill="#0040a0"/><rect x="1018" y="327" width="80" height="8" fill="#0030a0"/><rect x="1098" y="327" width="80" height="8" fill="#0020a0"/><rect x="1178" y="327" width="16" height="8" fill="#1020ff"/><rect x="1194" y="327" width="8" height="8" fill="#2020ff"/><rect x="1202" y="327" width="16" height="8" fill="#3020ff"/><rect x="1218" y="327" width="8" height="8" fill="#4020ff"/><rect x="1226" y="327" width="16" height="8" fill="#5010ff"/><rect x="1242" y="327" width="8" height="8" fill="#6010ff"/><rect x="1250" y="327" width="16" height="8" fill="#7010ff"/><rect x="1266" y="327" width="8" height="8" fill="#8000ff"/><rect x="1274" y="327" width="16" height="8" fill="#9000ff"/><rect x="1290" y="327" width="16" height="8" fill="#6000a0"/><rect x="1306" y="327" width="16" height="8" fill="#7000a0"/><rect x="1322" y="327" width="16" height="8" fill="#8000a0"/><rect x="1338" y="327" width="16" height="8" fill="#9000a0"/><rect x="1354" y="327" width="8" height="8" fill="#a000a0"/><rect x="1362" y="327" width="24" height="8" fill="#a00090"/><rect x="1386" y="327" width="24" height="8" fill="#a00080"/><rect x="1410" y="327" width="32" height="8" fill="#a00070"/><rect x="1442" y="327" width="40" height="8" fill="#a00060"/><rect x="1482" y="327" width="64" height="8" fill="#a00050"/><rect x="1546" y="327" width="80" height="8" fill="#a00040"/><rect x="1626" y="327" width="3" height="8" fill="#a00030"/><rect x="1010" y="335" width="72" height="8" fill="#0030a0"/><rect x="1082" y="335" width="88" height="8" fill="#0020a0"/><rect x="1170" y="335" width="8" height="8" fill="#0010a0"/><rect x="1178" y="335" width="16" height="8" fill="#1020ff"/><rect x="1194" y="335" width="16" height="8" fill="#2020ff"/><rect x="1210" y="335" width="8" height="8" fill="#3010ff"/><rect x="1218" y="335" width="16" height="8" fill="#4010ff"/><rect x="1234" y="335" width="8" height="8" fill="#5010ff"/><rect x="1242" y="335" width="16" height="8" fill="#6010ff"/><rect x="1258" y="335" width="16" height="8" fill="#7000ff"/><rect x="1274" y="335" width="8" height="8" fill="#8000ff"/><rect x="1282" y="335" width="8" height="8" fill="#5000a0"/><rect x="1290" y="335" width="16" height="8" fill="#6000a0"/><rect x="1306" y="335" width="24" height="8" fill="#7000a0"/><rect x="1330" y="335" width="16" height="8" fill="#8000a0"/><rect x="1346" y="335" width="16" height="8" fill="#9000a0"/><rect x="1362" y="335" width="8" height="8" fill="#a000a0"/><rect x="1370" y="335" width="24" height="8" fill="#a00090"/><rect x="1394" y="335" width="24" height="8" fill="#a00080"/><rect x="1418" y="335" width="32" height="8" fill="#a00070"/><rect x="1450" y="335" width="48" height="8" fill="#a00060"/><rect x="1498" y="335" width="56" height="8" fill="#a00050"/><rect x="1554" y="335" width="75" height="8" fill="#a00040"/><rect x="1010" y="343" width="56" height="8" fill="#0030a0"/><rect x="1066" y="343" width="88" height="8" fill="#0020a0"/><rect x="1154" y="343" width="24" height="8" fill="#0010a0"/><rect x="1178" y="343" width="8" height="8" fill="#0020ff"/><rect x="1186" y="343" width="8" height="8" fill="#1020ff"/><rect x="1194" y="343" width="8" height="8" fill="#2020ff"/><rect x="1202" y="343" width="8" height="8" fill="#2010ff"/><rect x="1210" y="343" width="16" height="8" fill="#3010ff"/><rect x="1226" y="343" width="8" height="8" fill="#4010ff"/><rect x="1234" y="343" width="16" height="8" fill="#5010ff"/><rect x="1250" y="343" width="16" height="8" fill="#6000ff"/><rect x="1266" y="343" width="8" height="8" fill="#7000ff"/><rect x="1274" y="343" width="16" height="8" fill="#5000a0"/><rect x="1290" y="343" width="24" height="8" fill="#6000a0"/><rect x="1314" y="343" width="16" height="8" fill="#7000a0"/><rect x="1330" y="343" width="24" height="8" fill="#8000a0"/><rect x="1354" y="343" width="16" height="8" fill="#9000a0"/><rect x="1370" y="343" width="8" height="8" fill="#a000a0"/><rect x="1378" y="343" width="24" height="8" fill="#a00090"/><rect x="1402" y="343" width="24" height="8" fill="#a00080"/><rect x="1426" y="343" width="40" height="8" fill="#a00070"/><rect x="1466" y="343" width="40" height="8" fill="#a00060"/><rect x="1506" y="343" width="64" height="8" fill="#a00050"/><rect x="1570" y="343" width="59" height="8" fill="#a00040"/><rect x="1010" y="351" width="40" height="8" fill="#0030a0"/><rect x="1050" y="351" width="88" height="8" fill="#0020a0"/><rect x="1138" y="351" width="40" height="8" fill="#0010a0"/><rect x="1178" y="351" width="8" height="8" fill="#0020ff"/><rect x="1186" y="351" width="8" height="8" fill="#1020ff"/><rect x="1194" y="351" width="8" height="8" fill="#1010ff"/><rect x="1202" y="351" width="8" height="8" fill="#2010ff"/><rect x="1210" y="351" width="16" height="8" fill="#3010ff"/><rect x="1226" y="351" width="16" height="8" fill="#4010ff"/><rect x="1242" y="351" width="8" height="8" fill="#5000ff"/><rect x="1250" y="351" width="16" height="8" fill="#6000ff"/><rect x="1266" y="351" width="8" height="8" fill="#4000a0"/><rect x="1274" y="351" width="24" height="8" fill="#5000a0"/><rect x="1298" y="351" width="24" height="8" fill="#6000a0"/><rect x="1322" y="351" width="16" height="8" fill="#7000a0"/><rect x="1338" y="351" width="24" height="8" fill="#8000a0"/><rect x="1362" y="351" width="16" height="8" fill="#9000a0"/><rect x="1378" y="351" width="8" height="8" fill="#a000a0"/><rect x="1386" y="351" width="24" height="8" fill="#a00090"/><rect x="1410" y="351" width="32" height="8" fill="#a00080"/><rect x="1442" y="351" width="32" height="8" fill="#a00070"/><rect x="1474" y="351" width="48" height="8" fill="#a00060"/><rect x="1522" y="351" width="64" height="8" fill="#a00050"/><rect x="1586" y="351" width="43" height="8" fill="#a00040"/><rect x="1010" y="359" width="32" height="8" fill="#0030a0"/><rect x="1042" y="359" width="88" height="8" fill="#0020a0"/><rect x="1130" y="359" width="48" height="8" fill="#0010a0"/><rect x="1178" y="359" width="8" height="8" fill="#0010ff"/><rect x="1186" y="359" width="16" height="8" fill="#1010ff"/><rect x="1202" y="359" width="16" height="8" fill="#2010ff"/><rect x="1218" y="359" width="8" height="8" fill="#3010ff"/><rect x="1226" y="359" width="8" height="8" fill="#4010ff"/><rect x="1234" y="359" width="8" height="8" fill="#4000ff"/><rect x="1242" y="359" width="16" height="8" fill="#5000ff"/><rect x="1258" y="359" width="24" height="8" fill="#4000a0"/><rect x="1282" y="359" width="24" height="8" fill="#5000a0"/><rect x="1306" y="359" width="16" height="8" fill="#6000a0"/><rect x="1322" y="359" width="24" height="8" fill="#7000a0"/><rect x="1346" y="359" width="24" height="8" fill="#8000a0"/><rect x="1370" y="359" width="16" height="8" fill="#9000a0"/><rect x="1386" y="359" width="8" height="8" fill="#a000a0"/><rect x="1394" y="359" width="24" height="8" fill="#a00090"/><rect x="1418" y="359" width="32" height="8" fill="#a00080"/><rect x="1450" y="359" width="40" height="8" fill="#a00070"/><rect x="1490" y="359" width="48" height="8" fill="#a00060"/><rect x="1538" y="359" width="64" height="8" fill="#a00050"/><rect x="1602" y="359" width="27" height="8" fill="#a00040"/><rect x="1010" y="367" width="16" height="8" fill="#0030a0"/><rect x="1026" y="367" width="88" height="8" fill="#0020a0"/><rect x="1114" y="367" width="64" height="8" fill="#0010a0"/><rect x="1178" y="367" width="8" height="8" fill="#0010ff"/><rect x="1186" y="367" width="16" height="8" fill="#1010ff"/><rect x="1202" y="367" width="16" height="8" fill="#2010ff"/><rect x="1218" y="367" width="8" height="8" fill="#3010ff"/><rect x="1226" y="367" width="8" height="8" fill="#3000ff"/><rect x="1234" y="367" width="16" height="8" fill="#4000ff"/><rect x="1250" y="367" width="16" height="8" fill="#3000a0"/><rect x="1266" y="367" width="24" height="8" fill="#4000a0"/><rect x="1290" y="367" width="16" height="8" fill="#5000a0"/><rect x="1306" y="367" width="24" height="8" fill="#6000a0"/><rect x="1330" y="367" width="24" height="8" fill="#7000a0"/><rect x="1354" y="367" width="24" height="8" fill="#8000a0"/><rect x="1378" y="367" width="16" height="8" fill="#9000a0"/><rect x="1394" y="367" width="8" height="8" fill="#a000a0"/><rect x="1402" y="367" width="24" height="8" fill="#a00090"/><rect x="1426" y="367" width="32" height="8" fill="#a00080"/><rect x="1458" y="367" width="40" height="8" fill="#a00070"/><rect x="1498" y="367" width="48" height="8" fill="#a00060"/><rect x="1546" y="367" width="72" height="8" fill="#a00050"/><rect x="1618" y="367" width="11" height="8" fill="#a00040"/><rect x="1010" y="375" width="96" height="8" fill="#0020a0"/><rect x="1106" y="375" width="72" height="8" fill="#0010a0"/><rect x="1178" y="375" width="8" height="8" fill="#0010ff"/><rect x="1186" y="375" width="16" height="8" fill="#1010ff"/><rect x="1202" y="375" width="8" height="8" fill="#2010ff"/><rect x="1210" y="375" width="8" height="8" fill="#2000ff"/><rect x="1218" y="375" width="16" height="8" fill="#3000ff"/><rect x="1234" y="375" width="8" height="8" fill="#4000ff"/><rect x="1242" y="375" width="24" height="8" fill="#3000a0"/><rect x="1266" y="375" width="24" height="8" fill="#4000a0"/><rect x="1290" y="375" width="24" height="8" fill="#5000a0"/><rect x="1314" y="375" width="24" height="8" fill="#6000a0"/><rect x="1338" y="375" width="24" height="8" fill="#7000a0"/><rect x="1362" y="375" width="24" height="8" fill="#8000a0"/><rect x="1386" y="375" width="16" height="8" fill="#9000a0"/><rect x="1402" y="375" width="8" height="8" fill="#a000a0"/><rect x="1410" y="375" width="32" height="8" fill="#a00090"/><rect x="1442" y="375" width="24" height="8" fill="#a00080"/><rect x="1466" y="375" width="40" height="8" fill="#a00070"/><rect x="1506" y="375" width="56" height="8" fill="#a00060"/><rect x="1562" y="375" width="67" height="8" fill="#a00050"/><rect x="1010" y="383" width="80" height="8" fill="#0020a0"/><rect x="1090" y="383" width="96" height="8" fill="#0010a0"/><rect x="1186" y="383" width="8" height="8" fill="#0010ff"/><rect x="1194" y="383" width="8" height="8" fill="#1010ff"/><rect x="1202" y="383" width="8" height="8" fill="#1000ff"/><rect x="1210" y="383" width="16" height="8" fill="#2000ff"/><rect x="1226" y="383" width="8" height="8" fill="#3000ff"/><rect x="1234" y="383" width="16" height="8" fill="#2000a0"/><rect x="1250" y="383" width="24" height="8" fill="#3000a0"/><rect x="1274" y="383" width="24" height="8" fill="#4000a0"/><rect x="1298" y="383" width="24" height="8" fill="#5000a0"/><rect x="1322" y="383" width="24" height="8" fill="#6000a0"/><rect x="1346" y="383" width="24" height="8" fill="#7000a0"/><rect x="1370" y="383" width="16" height="8" fill="#8000a0"/><rect x="1386" y="383" width="24" height="8" fill="#9000a0"/><rect x="1410" y="383" width="8" height="8" fill="#a000a0"/><rect x="1418" y="383" width="32" height="8" fill="#a00090"/><rect x="1450" y="383" width="32" height="8" fill="#a00080"/><rect x="1482" y="383" width="40" height="8" fill="#a00070"/><rect x="1522" y="383" width="48" height="8" fill="#a00060"/><rect x="1570" y="383" width="59" height="8" fill="#a00050"/><rect x="1010" y="391" width="72" height="8" fill="#0020a0"/><rect x="1082" y="391" width="96" height="8" fill="#0010a0"/><rect x="1178" y="391" width="8" height="8" fill="#0000a0"/><rect x="1186" y="391" width="8" height="8" fill="#0010ff"/><rect x="1194" y="391" width="16" height="8" fill="#1000ff"/><rect x="1210" y="391" width="16" height="8" fill="#2000ff"/><rect x="1226" y="391" width="24" height="8" fill="#2000a0"/><rect x="1250" y="391" width="24" height="8" fill="#3000a0"/><rect x="1274" y="391" width="24" height="8" fill="#4000a0"/><rect x="1298" y="391" width="24" height="8" fill="#5000a0"/><rect x="1322" y="391" width="24" height="8" fill="#6000a0"/><rect x="1346" y="391" width="24" height="8" fill="#7000a0"/><rect x="1370" y="391" width="24" height="8" fill="#8000a0"/><rect x="1394" y="391" width="24" height="8" fill="#9000a0"/><rect x="1418" y="391" width="8" height="8" fill="#a000a0"/><rect x="1426" y="391" width="32" height="8" fill="#a00090"/><rect x="1458" y="391" width="32" height="8" fill="#a00080"/><rect x="1490" y="391" width="40" height="8" fill="#a00070"/><rect x="1530" y="391" width="56" height="8" fill="#a00060"/><rect x="1586" y="391" width="43" height="8" fill="#a00050"/><rect x="1010" y="399" width="56" height="8" fill="#0020a0"/><rect x="1066" y="399" width="104" height="8" fill="#0010a0"/><rect x="1170" y="399" width="16" height="8" fill="#0000a0"/><rect x="1186" y="399" width="8" height="8" fill="#0000ff"/><rect x="1194" y="399" width="16" height="8" fill="#1000ff"/><rect x="1210" y="399" width="8" height="8" fill="#2000ff"/><rect x="1218" y="399" width="8" height="8" fill="#1000a0"/><rect x="1226" y="399" width="24" height="8" fill="#2000a0"/><rect x="1250" y="399" width="32" height="8" fill="#3000a0"/><rect x="1282" y="399" width="24" height="8" fill="#4000a0"/><rect x="1306" y="399" width="24" height="8" fill="#5000a0"/><rect x="1330" y="399" width="24" height="8" fill="#6000a0"/><rect x="1354" y="399" width="24" height="8" fill="#7000a0"/><rect x="1378" y="399" width="24" height="8" fill="#8000a0"/><rect x="1402" y="399" width="24" height="8" fill="#9000a0"/><rect x="1426" y="399" width="16" height="8" fill="#a000a0"/><rect x="1442" y="399" width="24" height="8" fill="#a00090"/><rect x="1466" y="399" width="32" height="8" fill="#a00080"/><rect x="1498" y="399" width="40" height="8" fill="#a00070"/><rect x="1538" y="399" width="56" height="8" fill="#a00060"/><rect x="1594" y="399" width="35" height="8" fill="#a00050"/><rect x="1010" y="407" width="48" height="8" fill="#0020a0"/><rect x="1058" y="407" width="104" height="8" fill="#0010a0"/><rect x="1162" y="407" width="24" height="8" fill="#0000a0"/><rect x="1186" y="407" width="8" height="8" fill="#0000ff"/><rect x="1194" y="407" width="16" height="8" fill="#1000ff"/><rect x="1210" y="407" width="16" height="8" fill="#1000a0"/><rect x="1226" y="407" width="32" height="8" fill="#2000a0"/><rect x="1258" y="407" width="24" height="8" fill="#3000a0"/><rect x="1282" y="407" width="24" height="8" fill="#4000a0"/><rect x="1306" y="407" width="32" height="8" fill="#5000a0"/><rect x="1338" y="407" width="24" height="8" fill="#6000a0"/><rect x="1362" y="407" width="24" height="8" fill="#7000a0"/><rect x="1386" y="407" width="24" height="8" fill="#8000a0"/><rect x="1410" y="407" width="24" height="8" fill="#9000a0"/><rect x="1434" y="407" width="16" height="8" fill="#a000a0"/><rect x="1450" y="407" width="24" height="8" fill="#a00090"/><rect x="1474" y="407" width="32" height="8" fill="#a00080"/><rect x="1506" y="407" width="48" height="8" fill="#a00070"/><rect x="1554" y="407" width="56" height="8" fill="#a00060"/><rect x="1610" y="407" width="19" height="8" fill="#a00050"/><rect x="1010" y="415" width="32" height="8" fill="#0020a0"/><rect x="1042" y="415" width="104" height="8" fill="#0010a0"/><rect x="1146" y="415" width="40" height="8" fill="#0000a0"/><rect x="1186" y="415" width="8" height="8" fill="#0000ff"/><rect x="1194" y="415" width="8" height="8" fill="#1000ff"/><rect x="1202" y="415" width="32" height="8" fill="#1000a0"/><rect x="1234" y="415" width="24" height="8" fill="#2000a0"/><rect x="1258" y="415" width="32" height="8" fill="#3000a0"/><rect x="1290" y="415" width="24" height="8" fill="#4000a0"/><rect x="1314" y="415" width="24" height="8" fill="#5000a0"/><rect x="1338" y="415" width="32" height="8" fill="#6000a0"/><rect x="1370" y="415" width="24" height="8" fill="#7000a0"/><rect x="1394" y="415" width="24" height="8" fill="#8000a0"/><rect x="1418" y="415" width="24" height="8" fill="#9000a0"/><rect x="1442" y="415" width="16" height="8" fill="#a000a0"/><rect x="1458" y="415" width="24" height="8" fill="#a00090"/><rect x="1482" y="415" width="40" height="8" fill="#a00080"/><rect x="1522" y="415" width="40" height="8" fill="#a00070"/><rect x="1562" y="415" width="64" height="8" fill="#a00060"/><rect x="1626" y="415" width="3" height="8" fill="#a00050"/><rect x="1010" y="423" width="24" height="8" fill="#0020a0"/><rect x="1034" y="423" width="104" height="8" fill="#0010a0"/><rect x="1138" y="423" width="48" height="8" fill="#0000a0"/><rect x="1186" y="423" width="8" height="8" fill="#0000ff"/><rect x="1194" y="423" width="8" height="8" fill="#0000a0"/><rect x="1202" y="423" width="32" height="8" fill="#1000a0"/><rect x="1234" y="423" width="32" height="8" fill="#2000a0"/><rect x="1266" y="423" width="24" height="8" fill="#3000a0"/><rect x="1290" y="423" width="32" height="8" fill="#4000a0"/><rect x="1322" y="423" width="24" height="8" fill="#5000a0"/><rect x="1346" y="423" width="24" height="8" fill="#6000a0"/><rect x="1370" y="423" width="32" height="8" fill="#7000a0"/><rect x="1402" y="423" width="24" height="8" fill="#8000a0"/><rect x="1426" y="423" width="24" height="8" fill="#9000a0"/><rect x="1450" y="423" width="16" height="8" fill="#a000a0"/><rect x="1466" y="423" width="24" height="8" fill="#a00090"/><rect x="1490" y="423" width="40" height="8" fill="#a00080"/><rect x="1530" y="423" width="48" height="8" fill="#a00070"/><rect x="1578" y="423" width="51" height="8" fill="#a00060"/><rect x="1010" y="431" width="8" height="8" fill="#0020a0"/><rect x="1018" y="431" width="112" height="8" fill="#0010a0"/><rect x="1130" y="431" width="80" height="8" fill="#0000a0"/><rect x="1210" y="431" width="24" height="8" fill="#1000a0"/><rect x="1234" y="431" width="32" height="8" fill="#2000a0"/><rect x="1266" y="431" width="32" height="8" fill="#3000a0"/><rect x="1298" y="431" width="24" height="8" fill="#4000a0"/><rect x="1322" y="431" width="32" height="8" fill="#5000a0"/><rect x="1354" y="431" width="24" height="8" fill="#6000a0"/><rect x="1378" y="431" width="32" height="8" fill="#7000a0"/><rect x="1410" y="431" width="24" height="8" fill="#8000a0"/><rect x="1434" y="431" width="24" height="8" fill="#9000a0"/><rect x="1458" y="431" width="16" height="8" fill="#a000a0"/><rect x="1474" y="431" width="24" height="8" fill="#a00090"/><rect x="1498" y="431" width="40" height="8" fill="#a00080"/><rect x="1538" y="431" width="48" height="8" fill="#a00070"/><rect x="1586" y="431" width="43" height="8" fill="#a00060"/><rect x="1010" y="439" width="112" height="8" fill="#0010a0"/><rect x="1122" y="439" width="88" height="8" fill="#0000a0"/><rect x="1210" y="439" width="32" height="8" fill="#1000a0"/><rect x="1242" y="439" width="24" height="8" fill="#2000a0"/><rect x="1266" y="439" width="32" height="8" fill="#3000a0"/><rect x="1298" y="439" width="32" height="8" fill="#4000a0"/><rect x="1330" y="439" width="24" height="8" fill="#5000a0"/><rect x="1354" y="439" width="32" height="8" fill="#6000a0"/><rect x="1386" y="439" width="24" height="8" fill="#7000a0"/><rect x="1410" y="439" width="32" height="8" fill="#8000a0"/><rect x="1442" y="439" width="24" height="8" fill="#9000a0"/><rect x="1466" y="439" width="16" height="8" fill="#a000a0"/><rect x="1482" y="439" width="24" height="8" fill="#a00090"/><rect x="1506" y="439" width="40" height="8" fill="#a00080"/><rect x="1546" y="439" width="48" height="8" fill="#a00070"/><rect x="1594" y="439" width="35" height="8" fill="#a00060"/><rect x="1010" y="447" width="104" height="8" fill="#0010a0"/><rect x="1114" y="447" width="96" height="8" fill="#0000a0"/><rect x="1210" y="447" width="32" height="8" fill="#1000a0"/><rect x="1242" y="447" width="32" height="8" fill="#2000a0"/><rect x="1274" y="447" width="32" height="8" fill="#3000a0"/><rect x="1306" y="447" width="24" height="8" fill="#4000a0"/><rect x="1330" y="447" width="32" height="8" fill="#5000a0"/><rect x="1362" y="447" width="32" height="8" fill="#6000a0"/><rect x="1394" y="447" width="24" height="8" fill="#7000a0"/><rect x="1418" y="447" width="32" height="8" fill="#8000a0"/><rect x="1450" y="447" width="24" height="8" fill="#9000a0"/><rect x="1474" y="447" width="16" height="8" fill="#a000a0"/><rect x="1490" y="447" width="32" height="8" fill="#a00090"/><rect x="1522" y="447" width="32" height="8" fill="#a00080"/><rect x="1554" y="447" width="56" height="8" fill="#a00070"/><rect x="1610" y="447" width="19" height="8" fill="#a00060"/><rect x="1010" y="455" width="96" height="8" fill="#0010a0"/><rect x="1106" y="455" width="104" height="8" fill="#0000a0"/><rect x="1210" y="455" width="32" height="8" fill="#1000a0"/><rect x="1242" y="455" width="32" height="8" fill="#2000a0"/><rect x="1274" y="455" width="32" height="8" fill="#3000a0"/><rect x="1306" y="455" width="32" height="8" fill="#4000a0"/><rect x="1338" y="455" width="32" height="8" fill="#5000a0"/><rect x="1370" y="455" width="24" height="8" fill="#6000a0"/><rect x="1394" y="455" width="32" height="8" fill="#7000a0"/><rect x="1426" y="455" width="32" height="8" fill="#8000a0"/><rect x="1458" y="455" width="24" height="8" fill="#9000a0"/><rect x="1482" y="455" width="16" height="8" fill="#a000a0"/><rect x="1498" y="455" width="32" height="8" fill="#a00090"/><rect x="1530" y="455" width="40" height="8" fill="#a00080"/><rect x="1570" y="455" width="48" height="8" fill="#a00070"/><rect x="1618" y="455" width="11" height="8" fill="#a00060"/><rect x="1010" y="463" width="88" height="8" fill="#0010a0"/><rect x="1098" y="463" width="112" height="8" fill="#0000a0"/><rect x="1210" y="463" width="32" height="8" fill="#1000a0"/><rect x="1242" y="463" width="40" height="8" fill="#2000a0"/><rect x="1282" y="463" width="32" height="8" fill="#3000a0"/><rect x="1314" y="463" width="24" height="8" fill="#4000a0"/><rect x="1338" y="463" width="32" height="8" fill="#5000a0"/><rect x="1370" y="463" width="32" height="8" fill="#6000a0"/><rect x="1402" y="463" width="32" height="8" fill="#7000a0"/><rect x="1434" y="463" width="24" height="8" fill="#8000a0"/><rect x="1458" y="463" width="32" height="8" fill="#9000a0"/><rect x="1490" y="463" width="16" height="8" fill="#a000a0"/><rect x="1506" y="463" width="32" height="8" fill="#a00090"/><rect x="1538" y="463" width="40" height="8" fill="#a00080"/><rect x="1578" y="463" width="48" height="8" fill="#a00070"/><rect x="1626" y="463" width="3" height="8" fill="#a00060"/><rect x="1010" y="471" width="72" height="8" fill="#0010a0"/><rect x="1082" y="471" width="136" height="8" fill="#0000a0"/><rect x="1218" y="471" width="32" height="8" fill="#1000a0"/><rect x="1250" y="471" width="32" height="8" fill="#2000a0"/><rect x="1282" y="471" width="32" height="8" fill="#3000a0"/><rect x="1314" y="471" width="32" height="8" fill="#4000a0"/><rect x="1346" y="471" width="32" height="8" fill="#5000a0"/><rect x="1378" y="471" width="32" height="8" fill="#6000a0"/><rect x="1410" y="471" width="32" height="8" fill="#7000a0"/><rect x="1442" y="471" width="24" height="8" fill="#8000a0"/><rect x="1466" y="471" width="32" height="8" fill="#9000a0"/><rect x="1498" y="471" width="16" height="8" fill="#a000a0"/><rect x="1514" y="471" width="32" height="8" fill="#a00090"/><rect x="1546" y="471" width="40" height="8" fill="#a00080"/><rect x="1586" y="471" width="43" height="8" fill="#a00070"/><rect x="1010" y="479" width="64" height="8" fill="#0010a0"/><rect x="1074" y="479" width="144" height="8" fill="#0000a0"/><rect x="1218" y="479" width="32" height="8" fill="#1000a0"/><rect x="1250" y="479" width="32" height="8" fill="#2000a0"/><rect x="1282" y="479" width="32" height="8" fill="#3000a0"/><rect x="1314" y="479" width="40" height="8" fill="#4000a0"/><rect x="1354" y="479" width="32" height="8" fill="#5000a0"/><rect x="1386" y="479" width="32" height="8" fill="#6000a0"/><rect x="1418" y="479" width="24" height="8" fill="#7000a0"/><rect x="1442" y="479" width="32" height="8" fill="#8000a0"/><rect x="1474" y="479" width="32" height="8" fill="#9000a0"/><rect x="1506" y="479" width="16" height="8" fill="#a000a0"/><rect x="1522" y="479" width="32" height="8" fill="#a00090"/><rect x="1554" y="479" width="40" height="8" fill="#a00080"/><rect x="1594" y="479" width="35" height="8" fill="#a00070"/><rect x="1010" y="487" width="56" height="8" fill="#0010a0"/><rect x="1066" y="487" width="152" height="8" fill="#0000a0"/><rect x="1218" y="487" width="32" height="8" fill="#1000a0"/><rect x="1250" y="487" width="40" height="8" fill="#2000a0"/><rect x="1290" y="487" width="32" height="8" fill="#3000a0"/><rect x="1322" y="487" width="32" height="8" fill="#4000a0"/><rect x="1354" y="487" width="32" height="8" fill="#5000a0"/><rect x="1386" y="487" width="32" height="8" fill="#6000a0"/><rect x="1418" y="487" width="32" height="8" fill="#7000a0"/><rect x="1450" y="487" width="32" height="8" fill="#8000a0"/><rect x="1482" y="487" width="32" height="8" fill="#9000a0"/><rect x="1514" y="487" width="16" height="8" fill="#a000a0"/><rect x="1530" y="487" width="32" height="8" fill="#a00090"/><rect x="1562" y="487" width="48" height="8" fill="#a00080"/><rect x="1610" y="487" width="19" height="8" fill="#a00070"/><rect x="1010" y="495" width="48" height="8" fill="#0010a0"/><rect x="1058" y="495" width="160" height="8" fill="#0000a0"/><rect x="1218" y="495" width="40" height="8" fill="#1000a0"/><rect x="1258" y="495" width="32" height="8" fill="#2000a0"/><rect x="1290" y="495" width="32" height="8" fill="#3000a0"/><rect x="1322" y="495" width="40" height="8" fill="#4000a0"/><rect x="1362" y="495" width="32" height="8" fill="#5000a0"/><rect x="1394" y="495" width="32" height="8" fill="#6000a0"/><rect x="1426" y="495" width="32" height="8" fill="#7000a0"/><rect x="1458" y="495" width="32" height="8" fill="#8000a0"/><rect x="1490" y="495" width="32" height="8" fill="#9000a0"/><rect x="1522" y="495" width="16" height="8" fill="#a000a0"/><rect x="1538" y="495" width="32" height="8" fill="#a00090"/><rect x="1570" y="495" width="48" height="8" fill="#a00080"/><rect x="1618" y="495" width="11" height="8" fill="#a00070"/><rect x="1010" y="503" width="40" height="8" fill="#0010a0"/><rect x="1050" y="503" width="168" height="8" fill="#0000a0"/><rect x="1218" y="503" width="40" height="8" fill="#1000a0"/><rect x="1258" y="503" width="40" height="8" fill="#2000a0"/><rect x="1298" y="503" width="32" height="8" fill="#3000a0"/><rect x="1330" y="503" width="32" height="8" fill="#4000a0"/><rect x="1362" y="503" width="40" height="8" fill="#5000a0"/><rect x="1402" y="503" width="32" height="8" fill="#6000a0"/><rect x="1434" y="503" width="32" height="8" fill="#7000a0"/><rect x="1466" y="503" width="32" height="8" fill="#8000a0"/><rect x="1498" y="503" width="32" height="8" fill="#9000a0"/><rect x="1530" y="503" width="16" height="8" fill="#a000a0"/><rect x="1546" y="503" width="32" height="8" fill="#a00090"/><rect x="1578" y="503" width="48" height="8" fill="#a00080"/><rect x="1626" y="503" width="3" height="8" fill="#a00070"/><rect x="1010" y="511" width="32" height="8" fill="#0010a0"/><rect x="1042" y="511" width="184" height="8" fill="#0000a0"/><rect x="1226" y="511" width="32" height="8" fill="#1000a0"/><rect x="1258" y="511" width="40" height="8" fill="#2000a0"/><rect x="1298" y="511" width="32" height="8" fill="#3000a0"/><rect x="1330" y="511" width="40" height="8" fill="#4000a0"/><rect x="1370" y="511" width="32" height="8" fill="#5000a0"/><rect x="1402" y="511" width="40" height="8" fill="#6000a0"/><rect x="1442" y="511" width="32" height="8" fill="#7000a0"/><rect x="1474" y="511" width="32" height="8" fill="#8000a0"/><rect x="1506" y="511" width="32" height="8" fill="#9000a0"/><rect x="1538" y="511" width="16" height="8" fill="#a000a0"/><rect x="1554" y="511" width="32" height="8" fill="#a00090"/><rect x="1586" y="511" width="43" height="8" fill="#a00080"/><rect x="1010" y="519" width="16" height="8" fill="#0010a0"/><rect x="1026" y="519" width="200" height="8" fill="#0000a0"/><rect x="1226" y="519" width="40" height="8" fill="#1000a0"/><rect x="1266" y="519" width="32" height="8" fill="#2000a0"/><rect x="1298" y="519" width="40" height="8" fill="#3000a0"/><rect x="1338" y="519" width="32" height="8" fill="#4000a0"/><rect x="1370" y="519" width="40" height="8" fill="#5000a0"/><rect x="1410" y="519" width="32" height="8" fill="#6000a0"/><rect x="1442" y="519" width="40" height="8" fill="#7000a0"/><rect x="1482" y="519" width="32" height="8" fill="#8000a0"/><rect x="1514" y="519" width="32" height="8" fill="#9000a0"/><rect x="1546" y="519" width="16" height="8" fill="#a000a0"/><rect x="1562" y="519" width="40" height="8" fill="#a00090"/><rect x="1602" y="519" width="27" height="8" fill="#a00080"/><rect x="1010" y="527" width="8" height="8" fill="#0010a0"/><rect x="1018" y="527" width="208" height="8" fill="#0000a0"/><rect x="1226" y="527" width="40" height="8" fill="#1000a0"/><rect x="1266" y="527" width="40" height="8" fill="#2000a0"/><rect x="1306" y="527" width="32" height="8" fill="#3000a0"/><rect x="1338" y="527" width="40" height="8" fill="#4000a0"/><rect x="1378" y="527" width="40" height="8" fill="#5000a0"/><rect x="1418" y="527" width="32" height="8" fill="#6000a0"/><rect x="1450" y="527" width="32" height="8" fill="#7000a0"/><rect x="1482" y="527" width="40" height="8" fill="#8000a0"/><rect x="1522" y="527" width="32" height="8" fill="#9000a0"/><rect x="1554" y="527" width="16" height="8" fill="#a000a0"/><rect x="1570" y="527" width="40" height="8" fill="#a00090"/><rect x="1610" y="527" width="19" height="8" fill="#a00080"/><rect x="1010" y="535" width="216" height="8" fill="#0000a0"/><rect x="1226" y="535" width="40" height="8" fill="#1000a0"/><rect x="1266" y="535" width="40" height="8" fill="#2000a0"/><rect x="1306" y="535" width="40" height="8" fill="#3000a0"/><rect x="1346" y="535" width="40" height="8" fill="#4000a0"/><rect x="1386" y="535" width="32" height="8" fill="#5000a0"/><rect x="1418" y="535" width="40" height="8" fill="#6000a0"/><rect x="1458" y="535" width="32" height="8" fill="#7000a0"/><rect x="1490" y="535" width="40" height="8" fill="#8000a0"/><rect x="1530" y="535" width="32" height="8" fill="#9000a0"/><rect x="1562" y="535" width="16" height="8" fill="#a000a0"/><rect x="1578" y="535" width="40" height="8" fill="#a00090"/><rect x="1618" y="535" width="11" height="8" fill="#a00080"/><rect x="1010" y="543" width="216" height="8" fill="#0000a0"/><rect x="1226" y="543" width="48" height="8" fill="#1000a0"/><rect x="1274" y="543" width="32" height="8" fill="#2000a0"/><rect x="1306" y="543" width="40" height="8" fill="#3000a0"/><rect x="1346" y="543" width="40" height="8" fill="#4000a0"/><rect x="1386" y="543" width="40" height="8" fill="#5000a0"/><rect x="1426" y="543" width="32" height="8" fill="#6000a0"/><rect x="1458" y="543" width="40" height="8" fill="#7000a0"/><rect x="1498" y="543" width="40" height="8" fill="#8000a0"/><rect x="1538" y="543" width="32" height="8" fill="#9000a0"/><rect x="1570" y="543" width="16" height="8" fill="#a000a0"/><rect x="1586" y="543" width="40" height="8" fill="#a00090"/><rect x="1626" y="543" width="3" height="8" fill="#a00080"/><rect x="1010" y="551" width="619" height="5" fill="#000000"/></g>
<linearGradient id="insA" x1="0" y1="0" x2="1" y2="1"><stop offset="0" stop-color="#5a8a00"/><stop offset="0.5" stop-color="#8c9000"/><stop offset="1" stop-color="#8a6a00"/></linearGradient>
<linearGradient id="insB" x1="0" y1="0.3" x2="1" y2="0.9"><stop offset="0" stop-color="#b0ff00"/><stop offset="0.45" stop-color="#ffff10"/><stop offset="1" stop-color="#ffb000"/></linearGradient>
<rect x="1418.5" y="409.5" width="203" height="136" fill="url(#insA)"/>
<path d="M1418.5 422.5 L1621.5 530 L1621.5 545.5 L1418.5 545.5 Z" fill="url(#insB)"/>
<text x="73.5" y="620" font-size="26.5" fill="#f2f2f2" text-anchor="start" textLength="226" lengthAdjust="spacingAndGlyphs" >Avg dE2000: 0,81</text>
<text x="68.5" y="660" font-size="26.5" fill="#f2f2f2" text-anchor="start" textLength="236.5" lengthAdjust="spacingAndGlyphs" >Max dE2000: 2,96</text>
<text x="39" y="705.6" font-size="26.5" fill="#f2f2f2" text-anchor="start" textLength="212.5" lengthAdjust="spacingAndGlyphs" >Current Reading</text>
<text x="39" y="739.7" font-size="23" fill="#f2f2f2" text-anchor="start" textLength="86" lengthAdjust="spacingAndGlyphs" >x: 0,421</text>
<text x="190.5" y="739.7" font-size="23" fill="#f2f2f2" text-anchor="start" textLength="100.5" lengthAdjust="spacingAndGlyphs" >y: 0,5081</text>
<text x="39" y="779.6" font-size="23" fill="#f2f2f2" text-anchor="start" textLength="93.5" lengthAdjust="spacingAndGlyphs" >fL: 62,31</text>
<text x="39" y="812.6" font-size="23" fill="#f2f2f2" text-anchor="start" textLength="154.5" lengthAdjust="spacingAndGlyphs" >cd/m²: 213,51</text>
<text x="476.5" y="622" font-size="13" fill="#d4d4d4" text-anchor="middle" textLength="80.5" lengthAdjust="spacingAndGlyphs" >RGB Balance</text>
<rect x="366.5" y="627.50" width="245.30" height="174.00" fill="#242424"/>
<rect x="366.5" y="670.35" width="245.30" height="1.3" fill="#8c8c8c"/>
<rect x="366.5" y="713.85" width="245.30" height="1.3" fill="#8c8c8c"/>
<rect x="366.5" y="757.35" width="245.30" height="1.3" fill="#8c8c8c"/>
<rect x="366.5" y="627.50" width="245.30" height="174.00" fill="none" stroke="#8c8c8c" stroke-width="1.4"/>
<rect x="365.8" y="626.00" width="246.70" height="1.6" fill="#a0a0a0"/>
<rect x="361.0" y="626.80" width="5.5" height="1.4" fill="#8c8c8c"/>
<text x="361.0" y="632.70" font-size="14.5" fill="#d4d4d4" text-anchor="end" >20</text>
<rect x="361.0" y="670.30" width="5.5" height="1.4" fill="#8c8c8c"/>
<text x="361.0" y="676.20" font-size="14.5" fill="#d4d4d4" text-anchor="end" >10</text>
<rect x="361.0" y="713.80" width="5.5" height="1.4" fill="#8c8c8c"/>
<text x="361.0" y="719.70" font-size="14.5" fill="#d4d4d4" text-anchor="end" >0</text>
<rect x="361.0" y="757.30" width="5.5" height="1.4" fill="#8c8c8c"/>
<text x="361.0" y="763.20" font-size="14.5" fill="#d4d4d4" text-anchor="end" >-10</text>
<rect x="361.0" y="800.80" width="5.5" height="1.4" fill="#8c8c8c"/>
<text x="361.0" y="806.70" font-size="14.5" fill="#d4d4d4" text-anchor="end" >-20</text>
<rect x="365.8" y="801.50" width="1.4" height="5" fill="#8c8c8c"/>
<rect x="611.0999999999999" y="801.50" width="1.4" height="5" fill="#8c8c8c"/>
<text x="490" y="817" font-size="14" fill="#d4d4d4" text-anchor="middle" >100%</text>
<rect x="391.2" y="713.8" width="65.5" height="3.6" fill="#000"/><rect x="392.5" y="714.6" width="63" height="1.6" fill="#c83030"/>
<rect x="457.5" y="713.8" width="65" height="3.6" fill="#000"/><rect x="458.8" y="714.6" width="62.5" height="1.6" fill="#309030"/>
<rect x="523.2" y="714" width="66" height="59" fill="#000"/><rect x="524.6" y="714.8" width="63.2" height="56.8" fill="url(#bbar)"/>
<linearGradient id="hdrg" x1="0" y1="0" x2="0" y2="1"><stop offset="0" stop-color="#303030"/><stop offset="0.45" stop-color="#2a2a2a"/><stop offset="0.55" stop-color="#161616"/><stop offset="1" stop-color="#111111"/></linearGradient>
<rect x="633" y="598" width="698" height="29.0" fill="url(#hdrg)"/>
<rect x="633" y="598" width="19" height="29.0" fill="#000"/>
<rect x="652" y="627" width="679" height="27.6" fill="#444444"/>
<rect x="633" y="627" width="19" height="27.6" fill="#2a2a2a"/>
<rect x="652" y="654.6" width="679" height="27.5" fill="#7f7f7f"/>
<rect x="633" y="654.6" width="19" height="27.5" fill="#2a2a2a"/>
<rect x="652" y="682.1" width="679" height="27.5" fill="#444444"/>
<rect x="633" y="682.1" width="19" height="27.5" fill="#2a2a2a"/>
<rect x="652" y="709.6" width="679" height="27.5" fill="#7f7f7f"/>
<rect x="633" y="709.6" width="19" height="27.5" fill="#2a2a2a"/>
<rect x="652" y="737.1" width="679" height="27.5" fill="#444444"/>
<rect x="633" y="737.1" width="19" height="27.5" fill="#2a2a2a"/>
<rect x="652" y="764.6" width="679" height="27.5" fill="#7f7f7f"/>
<rect x="633" y="764.6" width="19" height="27.5" fill="#2a2a2a"/>
<rect x="652" y="792.1" width="679" height="27.5" fill="#444444"/>
<rect x="633" y="792.1" width="19" height="27.5" fill="#2a2a2a"/>
<rect x="633" y="819.6" width="698" height="5" fill="#2c2c2c"/>
<text x="812.8" y="618" font-size="16.5" fill="#f4f4f4" text-anchor="start" textLength="38.7" lengthAdjust="spacingAndGlyphs" stroke="#f4f4f4" stroke-width="0.55">20%</text>
<text x="917.3" y="618" font-size="16.5" fill="#f4f4f4" text-anchor="start" textLength="38.7" lengthAdjust="spacingAndGlyphs" stroke="#f4f4f4" stroke-width="0.55">40%</text>
<text x="1022.3" y="618" font-size="16.5" fill="#f4f4f4" text-anchor="start" textLength="38.7" lengthAdjust="spacingAndGlyphs" stroke="#f4f4f4" stroke-width="0.55">60%</text>
<text x="1126.8" y="618" font-size="16.5" fill="#f4f4f4" text-anchor="start" textLength="38.7" lengthAdjust="spacingAndGlyphs" stroke="#f4f4f4" stroke-width="0.55">80%</text>
<text x="1232.2" y="618" font-size="16.5" fill="#f4f4f4" text-anchor="start" textLength="50" lengthAdjust="spacingAndGlyphs" stroke="#f4f4f4" stroke-width="0.55">100%</text>
<text x="658" y="647.9" font-size="17" fill="#f2f2f2" textLength="76" lengthAdjust="spacingAndGlyphs">x: CIE31</text>
<text x="812.8" y="647.9" font-size="17" fill="#f2f2f2" textLength="66" lengthAdjust="spacingAndGlyphs">0,3355</text>
<text x="917.3" y="647.9" font-size="17" fill="#f2f2f2" textLength="66" lengthAdjust="spacingAndGlyphs">0,3577</text>
<text x="1022.3" y="647.9" font-size="17" fill="#f2f2f2" textLength="66" lengthAdjust="spacingAndGlyphs">0,3784</text>
<text x="1126.8" y="647.9" font-size="17" fill="#f2f2f2" textLength="66" lengthAdjust="spacingAndGlyphs">0,3982</text>
<text x="1232.2" y="647.9" font-size="17" fill="#f2f2f2" textLength="66" lengthAdjust="spacingAndGlyphs">0,4210</text>
<text x="658" y="675.2" font-size="17" fill="#f2f2f2" textLength="76" lengthAdjust="spacingAndGlyphs">y: CIE31</text>
<text x="812.8" y="675.2" font-size="17" fill="#f2f2f2" textLength="66" lengthAdjust="spacingAndGlyphs">0,3678</text>
<text x="917.3" y="675.2" font-size="17" fill="#f2f2f2" textLength="66" lengthAdjust="spacingAndGlyphs">0,4052</text>
<text x="1022.3" y="675.2" font-size="17" fill="#f2f2f2" textLength="66" lengthAdjust="spacingAndGlyphs">0,4389</text>
<text x="1126.8" y="675.2" font-size="17" fill="#f2f2f2" textLength="66" lengthAdjust="spacingAndGlyphs">0,4713</text>
<text x="1232.2" y="675.2" font-size="17" fill="#f2f2f2" textLength="66" lengthAdjust="spacingAndGlyphs">0,5081</text>
<text x="658" y="702.4" font-size="17" fill="#f2f2f2" textLength="14" lengthAdjust="spacingAndGlyphs">Y</text>
<text x="812.8" y="702.4" font-size="17" fill="#f2f2f2" textLength="89.5" lengthAdjust="spacingAndGlyphs">226,6897</text>
<text x="917.3" y="702.4" font-size="17" fill="#f2f2f2" textLength="89.5" lengthAdjust="spacingAndGlyphs">222,7471</text>
<text x="1022.3" y="702.4" font-size="17" fill="#f2f2f2" textLength="89.5" lengthAdjust="spacingAndGlyphs">219,3506</text>
<text x="1126.8" y="702.4" font-size="17" fill="#f2f2f2" textLength="89.5" lengthAdjust="spacingAndGlyphs">216,5912</text>
<text x="1232.2" y="702.4" font-size="17" fill="#f2f2f2" textLength="89.5" lengthAdjust="spacingAndGlyphs">213,5070</text>
<text x="658" y="729.7" font-size="17" fill="#f2f2f2" textLength="139" lengthAdjust="spacingAndGlyphs">Target x:CIE31</text>
<text x="812.8" y="729.7" font-size="17" fill="#f2f2f2" textLength="66" lengthAdjust="spacingAndGlyphs">0,3344</text>
<text x="917.3" y="729.7" font-size="17" fill="#f2f2f2" textLength="66" lengthAdjust="spacingAndGlyphs">0,3564</text>
<text x="1022.3" y="729.7" font-size="17" fill="#f2f2f2" textLength="66" lengthAdjust="spacingAndGlyphs">0,3773</text>
<text x="1126.8" y="729.7" font-size="17" fill="#f2f2f2" textLength="66" lengthAdjust="spacingAndGlyphs">0,3969</text>
<text x="1232.2" y="729.7" font-size="17" fill="#f2f2f2" textLength="66" lengthAdjust="spacingAndGlyphs">0,4193</text>
<text x="658" y="757.0" font-size="17" fill="#f2f2f2" textLength="139" lengthAdjust="spacingAndGlyphs">Target y:CIE31</text>
<text x="812.8" y="757.0" font-size="17" fill="#f2f2f2" textLength="66" lengthAdjust="spacingAndGlyphs">0,3648</text>
<text x="917.3" y="757.0" font-size="17" fill="#f2f2f2" textLength="66" lengthAdjust="spacingAndGlyphs">0,4013</text>
<text x="1022.3" y="757.0" font-size="17" fill="#f2f2f2" textLength="66" lengthAdjust="spacingAndGlyphs">0,4358</text>
<text x="1126.8" y="757.0" font-size="17" fill="#f2f2f2" textLength="66" lengthAdjust="spacingAndGlyphs">0,4682</text>
<text x="1232.2" y="757.0" font-size="17" fill="#f2f2f2" textLength="66" lengthAdjust="spacingAndGlyphs">0,5053</text>
<text x="658" y="784.2" font-size="17" fill="#f2f2f2" textLength="82" lengthAdjust="spacingAndGlyphs">Target Y</text>
<text x="812.8" y="784.2" font-size="17" fill="#f2f2f2" textLength="89.5" lengthAdjust="spacingAndGlyphs">226,9226</text>
<text x="917.3" y="784.2" font-size="17" fill="#f2f2f2" textLength="89.5" lengthAdjust="spacingAndGlyphs">222,9395</text>
<text x="1022.3" y="784.2" font-size="17" fill="#f2f2f2" textLength="89.5" lengthAdjust="spacingAndGlyphs">219,8790</text>
<text x="1126.8" y="784.2" font-size="17" fill="#f2f2f2" textLength="89.5" lengthAdjust="spacingAndGlyphs">217,4771</text>
<text x="1232.2" y="784.2" font-size="17" fill="#f2f2f2" textLength="89.5" lengthAdjust="spacingAndGlyphs">215,1550</text>
<text x="658" y="811.5" font-size="17" fill="#f2f2f2" textLength="82" lengthAdjust="spacingAndGlyphs">ΔE 2000</text>
<text x="812.8" y="811.5" font-size="17" fill="#f2f2f2" textLength="66" lengthAdjust="spacingAndGlyphs">0,8240</text>
<text x="917.3" y="811.5" font-size="17" fill="#f2f2f2" textLength="66" lengthAdjust="spacingAndGlyphs">0,6888</text>
<text x="1022.3" y="811.5" font-size="17" fill="#f2f2f2" textLength="66" lengthAdjust="spacingAndGlyphs">0,4267</text>
<text x="1126.8" y="811.5" font-size="17" fill="#f2f2f2" textLength="66" lengthAdjust="spacingAndGlyphs">0,3826</text>
<text x="1232.2" y="811.5" font-size="17" fill="#f2f2f2" textLength="66" lengthAdjust="spacingAndGlyphs">0,4025</text>
<rect x="0" y="826" width="1651" height="75" fill="#2c2c2c"/>
<linearGradient id="bbtn" x1="0" y1="0" x2="0" y2="1"><stop offset="0" stop-color="#a4a4a4"/><stop offset="0.5" stop-color="#8a8a8a"/><stop offset="1" stop-color="#626262"/></linearGradient>
<linearGradient id="bdark" x1="0" y1="0" x2="0" y2="1"><stop offset="0" stop-color="#484848"/><stop offset="1" stop-color="#232323"/></linearGradient>
<linearGradient id="knobg" x1="0" y1="0" x2="0" y2="1"><stop offset="0" stop-color="#5e5e5e"/><stop offset="1" stop-color="#b4b4b4"/></linearGradient>
<rect x="0" y="826.3" width="54.3" height="80" rx="4" fill="url(#bbtn)"/>
<circle cx="26.5" cy="837.8" r="9.5" fill="url(#knobg)"/><path d="M21 841.5 L32 841.5 L26.5 835.5 Z" fill="#222"/>
<rect x="4.7" y="859.1" width="43.8" height="37.8" rx="4" fill="#ffff00" stroke="#b0b000" stroke-width="1"/>
<rect x="62.2" y="826.3" width="187.4" height="80" rx="4" fill="url(#bbtn)"/>
<rect x="68.5" y="833.1" width="175.1" height="44.9" rx="4" fill="#c0c0a0" stroke="#8a8a60" stroke-width="1"/>
<text x="155.9" y="897" font-size="14" fill="#2a2a2a" text-anchor="middle" stroke="#2a2a2a" stroke-width="0.35">20%</text>
<rect x="252" y="826.3" width="187.2" height="80" rx="4" fill="url(#bbtn)"/>
<rect x="258.3" y="833.1" width="174.9" height="44.9" rx="4" fill="#c2c286" stroke="#8a8a60" stroke-width="1"/>
<text x="345.6" y="897" font-size="14" fill="#2a2a2a" text-anchor="middle" stroke="#2a2a2a" stroke-width="0.35">40%</text>
<rect x="441.9" y="826.3" width="187.3" height="80" rx="4" fill="url(#bbtn)"/>
<rect x="448.2" y="833.1" width="175.0" height="44.9" rx="4" fill="#c0c070" stroke="#8a8a60" stroke-width="1"/>
<text x="535.5" y="897" font-size="14" fill="#2a2a2a" text-anchor="middle" stroke="#2a2a2a" stroke-width="0.35">60%</text>
<rect x="631.6" y="826.3" width="188.0" height="80" rx="4" fill="url(#bbtn)"/>
<rect x="637.9" y="833.1" width="175.7" height="44.9" rx="4" fill="#c2c050" stroke="#8a8a60" stroke-width="1"/>
<text x="725.6" y="897" font-size="14" fill="#2a2a2a" text-anchor="middle" stroke="#2a2a2a" stroke-width="0.35">80%</text>
<linearGradient id="selbtn" x1="0" y1="0" x2="0" y2="1"><stop offset="0" stop-color="#1a1a1a"/><stop offset="0.5" stop-color="#2a2a2a"/><stop offset="1" stop-color="#3a3a3a"/></linearGradient>
<rect x="822.3" y="826.6" width="186.5" height="80" rx="5" fill="url(#selbtn)"/>
<rect x="828" y="832.6" width="175.7" height="45.4" rx="4" fill="#c4c000" stroke="#8a8800" stroke-width="1"/>
<text x="915.3" y="897" font-size="13.5" fill="#ffffff" text-anchor="middle" font-weight="bold">100%</text>
<rect x="1009" y="826.6" width="260" height="80" rx="4" fill="url(#bdark)"/>
<rect x="1263.6" y="826.6" width="59.4" height="80" rx="4" fill="url(#bbtn)"/>
<rect x="1263.6" y="849" width="59.4" height="1.4" fill="#3a3a3a"/>
<circle cx="1293.3" cy="837.5" r="9" fill="url(#knobg)"/><path d="M1288 840.5 L1299 840.5 L1293.5 834.5 Z" fill="#222"/>
<rect x="1275.5" y="858.5" width="35.5" height="36" rx="5" fill="#9a9a9a" stroke="#1e1e1e" stroke-width="3"/>
<rect x="1285" y="868" width="17" height="17" fill="#111"/>
<rect x="1607" y="826" width="44" height="38" fill="#262626"/>
<circle cx="1636" cy="845" r="12" fill="#303030"/>
<rect x="1324" y="826" width="58.1" height="37.7" fill="url(#bbtn)"/>
<circle cx="1353.0" cy="845" r="12.3" fill="url(#knobg)"/>
<rect x="1383.3" y="826" width="55.0" height="37.7" fill="url(#bbtn)"/>
<circle cx="1410.8" cy="845" r="12.3" fill="url(#knobg)"/>
<rect x="1439.3" y="826" width="54.7" height="37.7" fill="url(#bbtn)"/>
<circle cx="1466.7" cy="845" r="12.3" fill="url(#knobg)"/>
<rect x="1496" y="826" width="55.5" height="37.7" fill="url(#bbtn)"/>
<circle cx="1523.8" cy="845" r="12.3" fill="url(#knobg)"/>
<rect x="1552.5" y="826" width="54.5" height="37.7" fill="url(#bbtn)"/>
<circle cx="1579.8" cy="845" r="12.3" fill="url(#knobg)"/>
<rect x="1348.3" y="840.4" width="10.2" height="9.8" fill="#262626"/>
<path d="M1406.7 839.9 L1417.3 846.1 L1406.7 852.3 Z" fill="#222"/>
<path d="M1462 839 L1459.5 839 L1459.5 852 L1462 852" fill="none" stroke="#2a2a2a" stroke-width="2.4"/>
<path d="M1472 839 L1474.5 839 L1474.5 852 L1472 852" fill="none" stroke="#2a2a2a" stroke-width="2.4"/>
<circle cx="1465.3" cy="845.5" r="1" fill="#2a2a2a"/><circle cx="1468.9" cy="845.5" r="1" fill="#2a2a2a"/>
<path d="M1523.4 845.2 C1520 841.5 1515.5 841.8 1515.5 845.2 C1515.5 848.6 1520 848.9 1523.4 845.2 C1526.8 841.5 1531.3 841.8 1531.3 845.2 C1531.3 848.6 1526.8 848.9 1523.4 845.2 Z" fill="none" stroke="#2a2a2a" stroke-width="2.3"/>
<path d="M1574 844 A6 6 0 0 1 1584 841.5" fill="none" stroke="#2a2a2a" stroke-width="2.6"/><path d="M1586.5 838.5 L1586.5 845 L1580.5 843.5 Z" fill="#2a2a2a"/>
<path d="M1584.5 848.5 A6 6 0 0 1 1574.5 851" fill="none" stroke="#2a2a2a" stroke-width="2.6"/><path d="M1572.2 853.5 L1572.2 847 L1578 849 Z" fill="#2a2a2a"/>
<rect x="1324" y="865" width="170" height="40" rx="3" fill="url(#bbtn)"/>
<rect x="1496" y="865" width="160" height="40" rx="3" fill="url(#bbtn)"/>
<circle cx="1363" cy="884.2" r="12.3" fill="url(#knobg)"/><circle cx="1629.7" cy="884.2" r="12.3" fill="url(#knobg)"/>
<text x="1363" y="890.5" font-size="20" fill="#2a2a2a" text-anchor="middle" font-weight="bold">«</text>
<text x="1629.7" y="890.5" font-size="20" fill="#2a2a2a" text-anchor="middle" font-weight="bold">»</text>
<text x="1395.5" y="893.6" font-size="26" fill="#303030" text-anchor="start" textLength="63" lengthAdjust="spacingAndGlyphs" font-weight="bold">Back</text>
<text x="1528.5" y="893.6" font-size="26" fill="#303030" text-anchor="start" textLength="65" lengthAdjust="spacingAndGlyphs" font-weight="bold">Next</text>
</svg>
<canvas id="cie" width="619" height="477" style="left:1010px;top:79px"></canvas>
<canvas id="ins" width="203" height="136" style="left:1418.5px;top:409.5px"></canvas>
<svg width="1651" height="901" viewBox="0 0 1651 901" font-family='"Liberation Sans", sans-serif' style="position:absolute;left:0;top:0"><rect x="1009.8" y="78.5" width="618.7" height="476.7" fill="none" stroke="#9a9a9a" stroke-width="1.4"/><rect x="1009.10" y="555.2" width="1.4" height="5.5" fill="#b0b0b0"/><text x="1009.8" y="576" font-size="14.2" fill="#d4d4d4" text-anchor="middle" >0</text><rect x="1060.50" y="555.2" width="1.4" height="5.5" fill="#b0b0b0"/><text x="1061.2" y="576" font-size="14.2" fill="#d4d4d4" text-anchor="middle" >0,05</text><rect x="1111.90" y="555.2" width="1.4" height="5.5" fill="#b0b0b0"/><text x="1112.6" y="576" font-size="14.2" fill="#d4d4d4" text-anchor="middle" >0,1</text><rect x="1163.30" y="555.2" width="1.4" height="5.5" fill="#b0b0b0"/><text x="1164.0" y="576" font-size="14.2" fill="#d4d4d4" text-anchor="middle" >0,15</text><rect x="1214.70" y="555.2" width="1.4" height="5.5" fill="#b0b0b0"/><text x="1215.4" y="576" font-size="14.2" fill="#d4d4d4" text-anchor="middle" >0,2</text><rect x="1266.10" y="555.2" width="1.4" height="5.5" fill="#b0b0b0"/><text x="1266.8" y="576" font-size="14.2" fill="#d4d4d4" text-anchor="middle" >0,25</text><rect x="1317.50" y="555.2" width="1.4" height="5.5" fill="#b0b0b0"/><text x="1318.2" y="576" font-size="14.2" fill="#d4d4d4" text-anchor="middle" >0,3</text><rect x="1368.90" y="555.2" width="1.4" height="5.5" fill="#b0b0b0"/><text x="1369.6" y="576" font-size="14.2" fill="#d4d4d4" text-anchor="middle" >0,35</text><rect x="1420.30" y="555.2" width="1.4" height="5.5" fill="#b0b0b0"/><text x="1421.0" y="576" font-size="14.2" fill="#d4d4d4" text-anchor="middle" >0,4</text><rect x="1471.70" y="555.2" width="1.4" height="5.5" fill="#b0b0b0"/><text x="1472.4" y="576" font-size="14.2" fill="#d4d4d4" text-anchor="middle" >0,45</text><rect x="1523.10" y="555.2" width="1.4" height="5.5" fill="#b0b0b0"/><text x="1523.8" y="576" font-size="14.2" fill="#d4d4d4" text-anchor="middle" >0,5</text><rect x="1574.50" y="555.2" width="1.4" height="5.5" fill="#b0b0b0"/><text x="1575.2" y="576" font-size="14.2" fill="#d4d4d4" text-anchor="middle" >0,55</text><rect x="1004.3" y="554.50" width="5.5" height="1.4" fill="#b0b0b0"/><text x="1003.8" y="560.4" font-size="14.2" fill="#d4d4d4" text-anchor="end" >0</text><rect x="1004.3" y="514.90" width="5.5" height="1.4" fill="#b0b0b0"/><text x="1003.8" y="520.8" font-size="14.2" fill="#d4d4d4" text-anchor="end" >0,05</text><rect x="1004.3" y="475.30" width="5.5" height="1.4" fill="#b0b0b0"/><text x="1003.8" y="481.2" font-size="14.2" fill="#d4d4d4" text-anchor="end" >0,1</text><rect x="1004.3" y="435.70" width="5.5" height="1.4" fill="#b0b0b0"/><text x="1003.8" y="441.6" font-size="14.2" fill="#d4d4d4" text-anchor="end" >0,15</text><rect x="1004.3" y="396.10" width="5.5" height="1.4" fill="#b0b0b0"/><text x="1003.8" y="402.0" font-size="14.2" fill="#d4d4d4" text-anchor="end" >0,2</text><rect x="1004.3" y="356.50" width="5.5" height="1.4" fill="#b0b0b0"/><text x="1003.8" y="362.4" font-size="14.2" fill="#d4d4d4" text-anchor="end" >0,25</text><rect x="1004.3" y="316.90" width="5.5" height="1.4" fill="#b0b0b0"/><text x="1003.8" y="322.8" font-size="14.2" fill="#d4d4d4" text-anchor="end" >0,3</text><rect x="1004.3" y="277.30" width="5.5" height="1.4" fill="#b0b0b0"/><text x="1003.8" y="283.2" font-size="14.2" fill="#d4d4d4" text-anchor="end" >0,35</text><rect x="1004.3" y="237.70" width="5.5" height="1.4" fill="#b0b0b0"/><text x="1003.8" y="243.6" font-size="14.2" fill="#d4d4d4" text-anchor="end" >0,4</text><rect x="1004.3" y="198.10" width="5.5" height="1.4" fill="#b0b0b0"/><text x="1003.8" y="204.0" font-size="14.2" fill="#d4d4d4" text-anchor="end" >0,45</text><rect x="1004.3" y="158.50" width="5.5" height="1.4" fill="#b0b0b0"/><text x="1003.8" y="164.4" font-size="14.2" fill="#d4d4d4" text-anchor="end" >0,5</text><rect x="1004.3" y="118.90" width="5.5" height="1.4" fill="#b0b0b0"/><text x="1003.8" y="124.8" font-size="14.2" fill="#d4d4d4" text-anchor="end" >0,55</text><rect x="1131.4" y="101.4" width="12.6" height="12.6" fill="#ffffff" fill-opacity="0.22" stroke="#f4f4f4" stroke-width="1.8"/><rect x="1143.3" y="113.3" width="12.6" height="12.6" fill="#ffffff" fill-opacity="0.22" stroke="#f4f4f4" stroke-width="1.8"/><rect x="1155.1" y="125.1" width="12.6" height="12.6" fill="#ffffff" fill-opacity="0.22" stroke="#f4f4f4" stroke-width="1.8"/><rect x="1169.7" y="139.7" width="12.6" height="12.6" fill="#ffffff" fill-opacity="0.22" stroke="#f4f4f4" stroke-width="1.8"/><rect x="1186.7" y="155.6" width="12.6" height="12.6" fill="#ffffff" fill-opacity="0.22" stroke="#f4f4f4" stroke-width="1.8"/><rect x="1213.3" y="109.0" width="12.6" height="12.6" fill="#ffffff" fill-opacity="0.22" stroke="#f4f4f4" stroke-width="1.8"/><rect x="1211.7" y="121.2" width="12.6" height="12.6" fill="#ffffff" fill-opacity="0.22" stroke="#f4f4f4" stroke-width="1.8"/><rect x="1210.2" y="131.3" width="12.6" height="12.6" fill="#ffffff" fill-opacity="0.22" stroke="#f4f4f4" stroke-width="1.8"/><rect x="1210.4" y="144.3" width="12.6" height="12.6" fill="#ffffff" fill-opacity="0.22" stroke="#f4f4f4" stroke-width="1.8"/><rect x="1209.2" y="159.2" width="12.6" height="12.6" fill="#ffffff" fill-opacity="0.22" stroke="#f4f4f4" stroke-width="1.8"/><rect x="1145.7" y="186.9" width="12.6" height="12.6" fill="#ffffff" fill-opacity="0.22" stroke="#f4f4f4" stroke-width="1.8"/><rect x="1157.7" y="184.7" width="12.6" height="12.6" fill="#ffffff" fill-opacity="0.22" stroke="#f4f4f4" stroke-width="1.8"/><rect x="1170.3" y="183.0" width="12.6" height="12.6" fill="#ffffff" fill-opacity="0.22" stroke="#f4f4f4" stroke-width="1.8"/><rect x="1182.2" y="180.7" width="12.6" height="12.6" fill="#ffffff" fill-opacity="0.22" stroke="#f4f4f4" stroke-width="1.8"/><rect x="1195.2" y="178.9" width="12.6" height="12.6" fill="#ffffff" fill-opacity="0.22" stroke="#f4f4f4" stroke-width="1.8"/><rect x="1253.0" y="168.5" width="12.6" height="12.6" fill="#ffffff" fill-opacity="0.22" stroke="#f4f4f4" stroke-width="1.8"/><rect x="1305.3" y="159.2" width="12.6" height="12.6" fill="#ffffff" fill-opacity="0.22" stroke="#f4f4f4" stroke-width="1.8"/><rect x="1352.2" y="152.6" width="12.6" height="12.6" fill="#ffffff" fill-opacity="0.22" stroke="#f4f4f4" stroke-width="1.8"/><rect x="1404.9" y="143.3" width="12.6" height="12.6" fill="#ffffff" fill-opacity="0.22" stroke="#f4f4f4" stroke-width="1.8"/><rect x="1466.9" y="132.9" width="12.6" height="12.6" fill="#ffffff" fill-opacity="0.22" stroke="#f4f4f4" stroke-width="1.8"/><rect x="1222.8" y="192.3" width="12.6" height="12.6" fill="#ffffff" fill-opacity="0.22" stroke="#f4f4f4" stroke-width="1.8"/><rect x="1241.7" y="210.3" width="12.6" height="12.6" fill="#ffffff" fill-opacity="0.22" stroke="#f4f4f4" stroke-width="1.8"/><rect x="1260.5" y="230.4" width="12.6" height="12.6" fill="#ffffff" fill-opacity="0.22" stroke="#f4f4f4" stroke-width="1.8"/><rect x="1285.7" y="255.5" width="12.6" height="12.6" fill="#ffffff" fill-opacity="0.22" stroke="#f4f4f4" stroke-width="1.8"/><rect x="1317.0" y="285.7" width="12.6" height="12.6" fill="#ffffff" fill-opacity="0.22" stroke="#f4f4f4" stroke-width="1.8"/><rect x="1203.6" y="205.3" width="12.6" height="12.6" fill="#ffffff" fill-opacity="0.22" stroke="#f4f4f4" stroke-width="1.8"/><rect x="1201.1" y="241.7" width="12.6" height="12.6" fill="#ffffff" fill-opacity="0.22" stroke="#f4f4f4" stroke-width="1.8"/><rect x="1196.9" y="284.4" width="12.6" height="12.6" fill="#ffffff" fill-opacity="0.22" stroke="#f4f4f4" stroke-width="1.8"/><rect x="1191.9" y="339.2" width="12.6" height="12.6" fill="#ffffff" fill-opacity="0.22" stroke="#f4f4f4" stroke-width="1.8"/><rect x="1183.9" y="422.7" width="12.6" height="12.6" fill="#ffffff" fill-opacity="0.22" stroke="#f4f4f4" stroke-width="1.8"/><circle cx="1137.6" cy="106.3" r="3.9" fill="#18b818" stroke="#000" stroke-width="1.2"/><circle cx="1149.4" cy="118.4" r="3.9" fill="#58a858" stroke="#000" stroke-width="1.2"/><circle cx="1161.4" cy="130.4" r="3.9" fill="#70aa70" stroke="#000" stroke-width="1.2"/><circle cx="1176" cy="144.5" r="3.9" fill="#88aa88" stroke="#000" stroke-width="1.2"/><circle cx="1193" cy="160.4" r="3.9" fill="#a0b0a0" stroke="#000" stroke-width="1.2"/><circle cx="1219.4" cy="114.2" r="3.9" fill="#c8c040" stroke="#000" stroke-width="1.2"/><circle cx="1218" cy="126.5" r="3.9" fill="#c0bc60" stroke="#000" stroke-width="1.2"/><circle cx="1216.4" cy="136.5" r="3.9" fill="#bcb878" stroke="#000" stroke-width="1.2"/><circle cx="1215.2" cy="149.6" r="3.9" fill="#b8b490" stroke="#000" stroke-width="1.2"/><circle cx="1214.5" cy="164.3" r="3.9" fill="#b8b8a8" stroke="#000" stroke-width="1.2"/><circle cx="1150.7" cy="192" r="3.9" fill="#18b0b8" stroke="#000" stroke-width="1.2"/><circle cx="1164.3" cy="189.1" r="3.9" fill="#48b0b0" stroke="#000" stroke-width="1.2"/><circle cx="1176" cy="186.4" r="3.9" fill="#70b4b4" stroke="#000" stroke-width="1.2"/><circle cx="1187.4" cy="185.2" r="3.9" fill="#88b4b4" stroke="#000" stroke-width="1.2"/><circle cx="1199.4" cy="182.4" r="3.9" fill="#a0b4b4" stroke="#000" stroke-width="1.2"/><circle cx="1260" cy="173.5" r="3.9" fill="#c09090" stroke="#000" stroke-width="1.2"/><circle cx="1314.5" cy="164.7" r="3.9" fill="#c07070" stroke="#000" stroke-width="1.2"/><circle cx="1362.7" cy="156.3" r="3.9" fill="#c05858" stroke="#000" stroke-width="1.2"/><circle cx="1419.2" cy="147.1" r="3.9" fill="#c03c3c" stroke="#000" stroke-width="1.2"/><circle cx="1481.1" cy="137.9" r="3.9" fill="#c01818" stroke="#000" stroke-width="1.2"/><circle cx="1228.7" cy="197.4" r="3.9" fill="#b8a0b8" stroke="#000" stroke-width="1.2"/><circle cx="1248" cy="215.4" r="3.9" fill="#b888b8" stroke="#000" stroke-width="1.2"/><circle cx="1266.8" cy="234.6" r="3.9" fill="#b870b8" stroke="#000" stroke-width="1.2"/><circle cx="1293.2" cy="259.3" r="3.9" fill="#b858b8" stroke="#000" stroke-width="1.2"/><circle cx="1324.2" cy="289.5" r="3.9" fill="#a830a8" stroke="#000" stroke-width="1.2"/><circle cx="1210.3" cy="210.3" r="3.9" fill="#a0a0c0" stroke="#000" stroke-width="1.2"/><circle cx="1207" cy="247.2" r="3.9" fill="#8888c0" stroke="#000" stroke-width="1.2"/><circle cx="1202.8" cy="290.3" r="3.9" fill="#6c6cc0" stroke="#000" stroke-width="1.2"/><circle cx="1197.3" cy="347.2" r="3.9" fill="#4848b8" stroke="#000" stroke-width="1.2"/><circle cx="1187.3" cy="429" r="3.9" fill="#1818a8" stroke="#000" stroke-width="1.2"/><rect x="1206.5" y="176.3" width="13" height="13" fill="#ffffff" fill-opacity="0.25" stroke="#000" stroke-width="2"/><circle cx="1211.6" cy="181.5" r="4.4" fill="#ffffff" stroke="#000" stroke-width="1.3"/><rect x="1417.5" y="408.5" width="205" height="137.7" fill="none" stroke="#8a8a8a" stroke-width="2"/><rect x="1513.3" y="470.7" width="12.6" height="12.6" fill="#ffffff" fill-opacity="0.2" stroke="#f4f4f4" stroke-width="1.8"/><circle cx="1525" cy="469.2" r="4.3" fill="#b8a800" stroke="#000" stroke-width="1.3"/></svg>
<script>(function(){
var L=[[0.1741,0.0050],[0.1740,0.0050],[0.1738,0.0049],[0.1736,0.0049],[0.1733,0.0048],[0.1730,0.0048],[0.1726,0.0048],[0.1721,0.0048],[0.1714,0.0051],[0.1703,0.0058],[0.1689,0.0069],[0.1669,0.0086],[0.1644,0.0109],[0.1611,0.0138],[0.1566,0.0177],[0.1510,0.0227],[0.1440,0.0297],[0.1355,0.0399],[0.1241,0.0578],[0.1096,0.0868],[0.0913,0.1327],[0.0687,0.2007],[0.0454,0.2950],[0.0235,0.4127],[0.0082,0.5384],[0.0039,0.6548],[0.0139,0.7502],[0.0389,0.8120],[0.0743,0.8338],[0.1142,0.8262],[0.1547,0.8059],[0.1929,0.7816],[0.2296,0.7543],[0.2658,0.7243],[0.3016,0.6923],[0.3373,0.6589],[0.3731,0.6245],[0.4087,0.5896],[0.4441,0.5547],[0.4788,0.5202],[0.5125,0.4866],[0.5448,0.4544],[0.5752,0.4242],[0.6029,0.3965],[0.6270,0.3725],[0.6482,0.3514],[0.6658,0.3340],[0.6801,0.3197],[0.6915,0.3083],[0.7006,0.2993],[0.7079,0.2920],[0.7140,0.2859],[0.7219,0.2809],[0.7230,0.2770],[0.7260,0.2740],[0.7283,0.2717],[0.7300,0.2700],[0.7311,0.2689],[0.7320,0.2680],[0.7327,0.2673],[0.7334,0.2666],[0.7340,0.2660],[0.7344,0.2656],[0.7346,0.2654],[0.7347,0.2653]];
var CX0=1009.8, CY0=555.2, KU=1028, KV=792, DIM=0.61;
var R=[0.4507,0.5229], G=[0.125,0.5625], B=[0.1754,0.1579];
function uv(x,y){var d=-2*x+12*y+3;return [4*x/d,9*y/d];}
var GEXP=1.0; function gam(c){return Math.pow(c,GEXP);}
function side(p,a,b){return (b[0]-a[0])*(p[1]-a[1])-(b[1]-a[1])*(p[0]-a[0]);}
function inTri(p){var s1=side(p,R,G),s2=side(p,G,B),s3=side(p,B,R);return (s1>=0&&s2>=0&&s3>=0)||(s1<=0&&s2<=0&&s3<=0);}
function col(u,v,out){
  var d=6*u-16*v+12; var x=9*u/d, y=4*v/d;
  if(y<=1e-4){out[0]=out[1]=out[2]=0;return;}
  var X=x/y, Z=(1-x-y)/y;
  var r=3.2406*X-1.5372-0.4986*Z, g=-0.9689*X+1.8758+0.0415*Z, b=0.0557*X-0.2040+1.0570*Z;
  if(r<0)r=0; if(g<0)g=0; if(b<0)b=0;
  var m=Math.max(r,g,b); r/=m; g/=m; b/=m;
  var f=inTri([u,v])?1:DIM;
  out[0]=gam(r)*255*f; out[1]=gam(g)*255*f; out[2]=gam(b)*255*f;
}
function draw(id, ox, oy, W, H, mapf, clipLocus){
  var cv=document.getElementById(id); var ctx=cv.getContext('2d');
  var img=ctx.createImageData(W,H); var d=img.data; var o=[0,0,0];
  for(var py=0;py<H;py++){for(var px=0;px<W;px++){
    var q=mapf(ox+px+0.5, oy+py+0.5); col(q[0],q[1],o);
    var i=(py*W+px)*4; d[i]=o[0]; d[i+1]=o[1]; d[i+2]=o[2]; d[i+3]=255;}}
  ctx.putImageData(img,0,0);
  if(clipLocus){
    ctx.globalCompositeOperation='destination-in';
    ctx.beginPath();
    var P=[]; for(var k=0;k<L.length;k++){var p=uv(L[k][0],L[k][1]); P.push([CX0+KU*p[0]-ox, CY0-KV*p[1]-oy]);}
    ctx.moveTo(P[0][0],P[0][1]);
    for(var k=1;k<P.length-1;k++){var mx=(P[k][0]+P[k+1][0])/2, my=(P[k][1]+P[k+1][1])/2; ctx.quadraticCurveTo(P[k][0],P[k][1],mx,my);}
    ctx.lineTo(P[P.length-1][0],P[P.length-1][1]);
    ctx.closePath(); ctx.fill();
    ctx.globalCompositeOperation='source-over';
  }
}
draw('cie', 1010, 79, 619, 477, function(X,Y){return [(X-CX0)/KU,(CY0-Y)/KV];}, true);
var IXx=0.4193, IYy=0.5053, IX=1519.6, IY=477, IKX=3100, IKY=2075;
draw('ins', 1418.5, 409.5, 203, 136, function(X,Y){return uv(IXx+(X-IX)/IKX, IYy-(Y-IY)/IKY);}, false);
})();
</script>
</body></html>
